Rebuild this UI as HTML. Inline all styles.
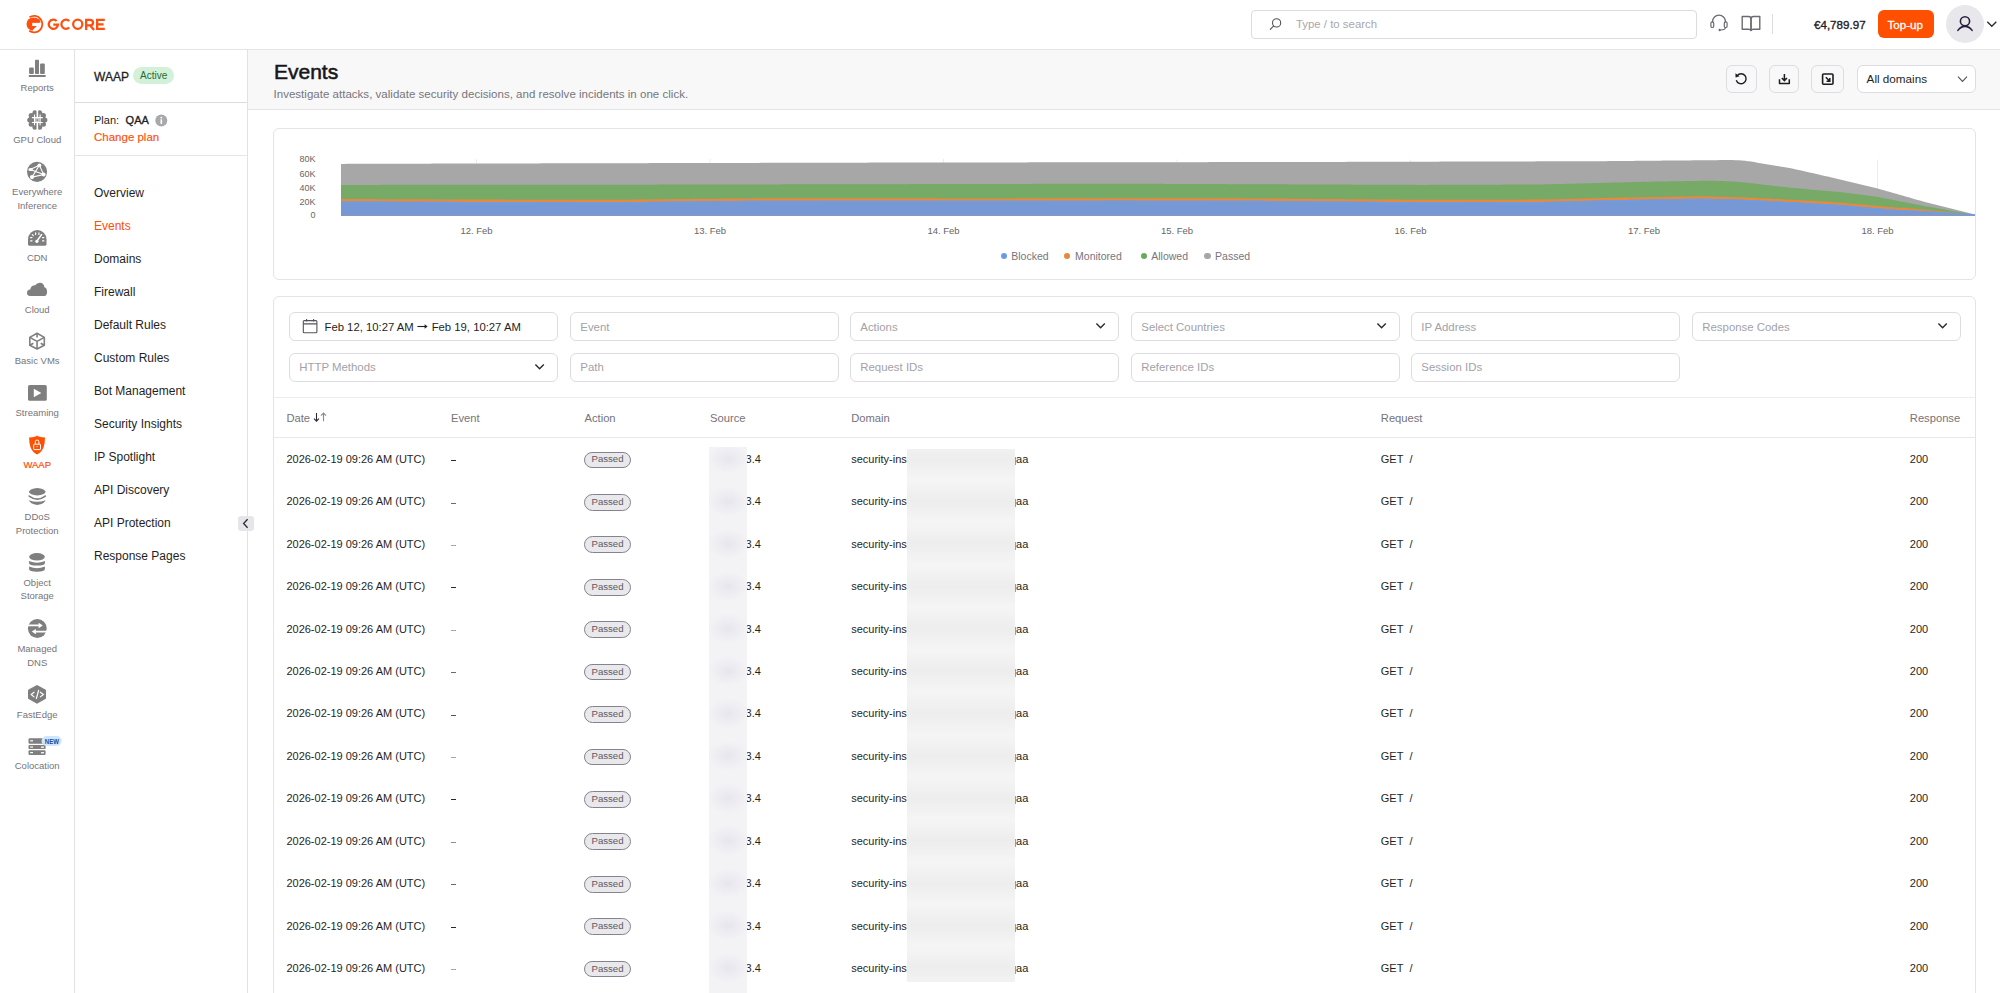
<!DOCTYPE html><html><head><meta charset="utf-8"><title>Events</title><style>
*{box-sizing:border-box;margin:0;padding:0}
html,body{width:2000px;height:993px;overflow:hidden;background:#fff}
body{position:relative;font-family:"Liberation Sans",sans-serif;color:#1f1f22}
.a{position:absolute}
.t{position:absolute;white-space:nowrap;line-height:1}
svg{position:absolute;overflow:visible}
</style></head><body>
<div class="a" style="left:0px;top:0px;width:2000px;height:50px;background:#fff;border-bottom:1px solid #e4e3e8;"></div>
<div class="a" style="left:0px;top:50px;width:75px;height:943px;background:#fff;border-right:1px solid #e2e1e6;"></div>
<div class="a" style="left:75px;top:50px;width:173px;height:943px;background:#fff;border-right:1px solid #e2e1e6;"></div>
<div class="a" style="left:248px;top:50px;width:1752px;height:60px;background:#f8f8f8;border-bottom:1px solid #e4e3e8;"></div>
<!-- logo -->
<svg style="left:0;top:0" width="120" height="50" viewBox="0 0 120 50">
  <circle cx="33.2" cy="24.1" r="6.7" fill="#ff4f0f"/>
  <path d="M35 17.6 L39.6 19.6 L40.6 22.85 L35 22.85 Z" fill="#ff4f0f"/>
  <rect x="32.2" y="22.85" width="9.2" height="3.1" fill="#fff"/>
  <path d="M36.8 25.9 L41.4 25.9 L41.4 32 L32.4 32 L33 29.8 Z" fill="#fff"/>
  <path d="M29.5 17.3 A8.25 8.25 0 1 1 29.2 30.8" fill="none" stroke="#ff4f0f" stroke-width="1.8"/>
  <g fill="none" stroke="#ff4f0f" stroke-width="2.25">
   <path d="M56.65 21.05 A4.6 4.6 0 1 0 57.95 24.6 H53.3"/>
   <path d="M69.25 21.05 A4.6 4.6 0 1 0 69.25 27.55"/>
   <circle cx="77.75" cy="24.3" r="4.6"/>
   <path d="M86.15 30 V19.75 H90.2 A2.85 2.85 0 0 1 90.2 25.45 H86.15 M90.2 25.45 L94.1 30"/>
   <path d="M104.8 19.75 H97.15 V28.85 H104.8 M97.15 24.35 H103.6"/>
  </g>
</svg>
<!-- search -->
<div class="a" style="left:1251px;top:10px;width:446px;height:29px;border:1px solid #dcdbe0;border-radius:4px;background:#fff"></div>
<svg style="left:1268px;top:16px" width="16" height="16" viewBox="0 0 16 16">
  <circle cx="8.6" cy="6.9" r="4.1" fill="none" stroke="#55535a" stroke-width="1.1"/>
  <path d="M5.7 9.8 L2.3 13.4" stroke="#55535a" stroke-width="1.1" stroke-linecap="round"/>
</svg>
<!-- headset -->
<svg style="left:1708px;top:13px" width="22" height="20" viewBox="0 0 22 20">
  <path d="M4.6 9.6 V8.6 A6.4 6.4 0 0 1 17.4 8.6 V9.6" fill="none" stroke="#6c6a71" stroke-width="1.3"/>
  <rect x="2.9" y="8.9" width="2.8" height="5.6" rx="1.3" fill="none" stroke="#6c6a71" stroke-width="1.2"/>
  <rect x="16.3" y="8.9" width="2.8" height="5.6" rx="1.3" fill="none" stroke="#6c6a71" stroke-width="1.2"/>
  <path d="M17.6 14.5 Q17.2 17 12.6 17" fill="none" stroke="#6c6a71" stroke-width="1.2"/>
  <circle cx="11.7" cy="17" r="1.2" fill="#6c6a71"/>
</svg>
<!-- book -->
<svg style="left:1740px;top:14px" width="22" height="20" viewBox="0 0 22 20">
  <path d="M2.2 2.5 H8.5 Q11 2.5 11 5 V16.5 Q10.5 15.2 8.5 15.2 H2.2 Z" fill="none" stroke="#6c6a71" stroke-width="1.4" stroke-linejoin="round"/>
  <path d="M19.8 2.5 H13.5 Q11 2.5 11 5 V16.5 Q11.5 15.2 13.5 15.2 H19.8 Z" fill="none" stroke="#6c6a71" stroke-width="1.4" stroke-linejoin="round"/>
</svg>
<div class="a" style="left:1772px;top:14px;width:1px;height:20px;background:#dddce1"></div>
<div class="a" style="left:1878px;top:10px;width:56px;height:28px;border-radius:6px;background:#ff4f00"></div>
<div class="a" style="left:1946px;top:5px;width:38px;height:38px;border-radius:50%;background:#e8e7ec"></div>
<svg style="left:1953px;top:12px" width="24" height="24" viewBox="0 0 24 24">
  <circle cx="12" cy="9.3" r="4.6" fill="none" stroke="#2a1f3d" stroke-width="1.6"/>
  <path d="M4.9 18.4 Q7.8 14.4 12 14.4 Q16.2 14.4 19.1 18.4" fill="none" stroke="#2a1f3d" stroke-width="1.6" stroke-linecap="round"/>
</svg>
<svg style="left:1985px;top:18px" width="14" height="12" viewBox="0 0 14 12">
  <path d="M2.3 3.8 L6.8 8.3 L11.3 3.8" fill="none" stroke="#2f2d33" stroke-width="1.4"/>
</svg>



<div class="t" style="left:1296px;top:19px;font-size:11.4px;color:#a9a7af;">Type / to search</div>
<div class="t" style="left:1814px;top:19px;font-size:11.6px;color:#1f1d24;-webkit-text-stroke:0.35px #1f1d24;">€4,789.97</div>
<div class="t" style="left:1887.5px;top:19px;font-size:11.6px;color:#ffffff;-webkit-text-stroke:0.3px #ffffff;">Top-up</div>
<svg style="left:0;top:0" width="75" height="800" viewBox="0 0 75 800">
 <g fill="#7f7f7f">
  <!-- Reports -->
  <rect x="29.1" y="67.4" width="4.7" height="6.6" rx="1"/>
  <rect x="35" y="59.8" width="4" height="14.2" rx="0.8"/>
  <rect x="40.1" y="63.6" width="4.7" height="10.4" rx="1"/>
  <rect x="28.8" y="75.1" width="16.9" height="1.8" rx="0.4"/>
  <!-- GPU cloud -->
  <circle cx="37.3" cy="119.9" r="8.2"/>
  <circle cx="39.65" cy="112.67" r="2.5"/><circle cx="43.45" cy="115.43" r="2.5"/><circle cx="44.90" cy="119.90" r="2.5"/><circle cx="43.45" cy="124.37" r="2.5"/><circle cx="39.65" cy="127.13" r="2.5"/><circle cx="34.95" cy="127.13" r="2.5"/><circle cx="31.15" cy="124.37" r="2.5"/><circle cx="29.70" cy="119.90" r="2.5"/><circle cx="31.15" cy="115.43" r="2.5"/><circle cx="34.95" cy="112.67" r="2.5"/>
 </g>
 <rect x="36.55" y="108" width="1.6" height="24" fill="#fff"/>
 <g stroke="#fff" stroke-width="1.1" fill="none">
  <path d="M34.5 114.6 V125.2 M40.1 114.6 V125.2 M31.9 117.6 H42.8 M31.9 122.5 H42.8"/>
 </g>
 <rect x="35.1" y="118.2" width="4.4" height="3.7" fill="#d0d0d0"/>
 <rect x="36.4" y="119.2" width="1.8" height="1.7" fill="#8a8a8a"/>
 <!-- Everywhere inference -->
 <circle cx="37.05" cy="171.85" r="10.05" fill="#7f7f7f"/>
 <g stroke="#fff" stroke-width="1.1" fill="none">
  <path d="M39.4 165.3 L32 177.1 L43.7 174.5 Z M30.2 169.5 L39.4 165.3 M30.2 169.5 L43.7 174.5"/>
 </g>
 <g fill="#fff">
  <circle cx="39.4" cy="165.3" r="1.9"/>
  <ellipse cx="30.6" cy="169.4" rx="2.3" ry="1.5"/>
  <circle cx="32" cy="177.1" r="2.1"/>
  <circle cx="43.7" cy="174.5" r="1.9"/>
 </g>
 <!-- CDN -->
 <path d="M28 239.2 A9.25 9.25 0 0 1 46.5 239.2 V244.3 Q46.5 245.7 45.1 245.7 H29.4 Q28 245.7 28 244.3 Z" fill="#7f7f7f"/>
 <g stroke="#fff" stroke-width="1.2" stroke-linecap="round" fill="none">
  <path d="M35.6 232.9 V234.4 M38.9 232.9 V234.4 M32.3 234.6 L33.3 235.6 M30.6 237.6 H32 M30.6 240.8 H32 M42.5 237.6 H43.9 M42.5 240.8 H43.9"/>
  <path d="M37 241 L41.6 234.5" stroke-width="1.4"/>
 </g>
 <circle cx="36.9" cy="241.3" r="1.6" fill="#fff"/>
 <!-- Cloud -->
 <path d="M30.4 296.1 Q27 296.1 27 292.8 Q27 289.6 30.2 289.4 Q31.2 285.2 35.2 285.3 Q36.8 282.4 40.6 282.7 Q44 283.2 44.4 287.3 Q47.1 288.1 47.1 291.9 Q47.1 296.1 43.3 296.1 Z" fill="#7f7f7f"/>
 <!-- Basic VMs cube -->
 <g stroke="#7f7f7f" stroke-width="1.6" fill="none" stroke-linejoin="round">
  <path d="M37.05 333.2 L44.3 337.4 V345.2 L37.05 349 L29.8 345.2 V337.4 Z"/>
  <path d="M29.8 337.4 L37.05 341.4 L44.3 337.4 M37.05 341.4 V349 M37.05 333.2 V337.6 M29.8 345.2 L33.4 343.2 M44.3 345.2 L40.7 343.2"/>
 </g>
 <!-- Streaming -->
 <rect x="28" y="385.1" width="18.8" height="15.7" rx="1.6" fill="#7f7f7f"/>
 <path d="M33.8 388.8 L41.3 393 L33.8 397.3 Z" fill="#fff"/>
 <!-- WAAP shield -->
 <path d="M37.05 435.4 Q38 437 45 437.4 Q45 442.5 43.6 447.2 Q41.5 452.3 37.05 454.5 Q32.6 452.3 30.5 447.2 Q29.1 442.5 29.1 437.4 Q36.1 437 37.05 435.4 Z" fill="#ff4f00"/>
 <g stroke="#fff" stroke-width="1" fill="none">
  <rect x="33.7" y="444.2" width="6.8" height="5.4" rx="0.6"/>
  <path d="M35.3 444.2 V441.8 A1.8 1.8 0 0 1 38.9 441.8 V444.2"/>
 </g>
 <circle cx="37.1" cy="446.6" r="0.6" fill="#fff"/>
 <!-- DDoS -->
 <path d="M28.8 491.8 Q30 488.6 37.25 487.9 Q44.5 488.6 45.7 491.8 Q44.5 495 37.25 495.6 Q30 495 28.8 491.8 Z" fill="#7f7f7f"/>
 <path d="M29.2 496.1 Q37.25 502.2 45.3 496.1" stroke="#7f7f7f" stroke-width="1.6" fill="none" stroke-linecap="round"/>
 <path d="M28.9 500.2 Q37.25 503.4 45.6 500.2 Q44.6 503.6 37.25 505.1 Q29.9 503.6 28.9 500.2 Z" fill="#7f7f7f"/>
 <!-- Object storage -->
 <ellipse cx="37" cy="556.8" rx="7.85" ry="3.7" fill="#7f7f7f"/>
 <path d="M29.1 561 Q37 564.6 44.9 561 V563.2 Q44.9 565.5 37 565.5 Q29.1 565.5 29.1 563.2 Z" fill="#7f7f7f"/>
 <path d="M29.1 566.6 Q37 570 44.9 566.6 V569 Q44.9 571.8 37 571.8 Q29.1 571.8 29.1 569 Z" fill="#7f7f7f"/>
 <!-- Managed DNS -->
 <circle cx="37.3" cy="628.5" r="9.4" fill="#7f7f7f"/>
 <g fill="#fff">
  <path d="M27.6 624.6 H38.6 V622.8 L42.8 625.4 L38.6 628.2 V626.2 H27.6 Z"/>
  <path d="M47 630.8 H35.9 V629.1 L31.7 631.6 L35.9 634.2 V632.4 H47 Z"/>
 </g>
 <!-- FastEdge -->
 <path d="M37 685 L45.4 689.6 Q46 690 46 690.8 V697.9 Q46 698.7 45.4 699.1 L37 703.7 L28.6 699.1 Q28 698.7 28 697.9 V690.8 Q28 690 28.6 689.6 Z" fill="#7f7f7f"/>
 <g stroke="#fff" stroke-width="1.2" fill="none" stroke-linecap="round">
  <path d="M34 692.2 L31.2 694.5 L34 696.9 M40.3 692.2 L43.4 694.5 L40.3 696.9 M38.6 690.4 L36.4 698.5"/>
 </g>
 <!-- Colocation -->
 <g fill="#7f7f7f">
  <rect x="28.5" y="738.2" width="17.1" height="5.6" rx="1.3"/>
  <rect x="28.5" y="744.9" width="17.1" height="4.2" rx="1.2"/>
  <rect x="28.5" y="750.3" width="17.1" height="4.6" rx="1.2"/>
 </g>
 <g fill="#fff">
  <rect x="30.2" y="740.2" width="2.8" height="1.2"/>
  <rect x="30.2" y="746.4" width="2.8" height="1.2"/>
  <rect x="30.2" y="752" width="2.8" height="1.2"/>
  <rect x="41" y="746.5" width="3" height="1.3"/>
  <rect x="41" y="752.1" width="3" height="1.3"/>
 </g>
 <rect x="41.6" y="736" width="20.1" height="10" rx="5" fill="#d3e5fa"/>
 <text x="44.8" y="743.7" font-family="Liberation Sans" font-weight="700" font-size="6.6" fill="#1d4b8f" textLength="14.2" lengthAdjust="spacingAndGlyphs">NEW</text>
</svg>

<div class="t" style="left:0.20000000000000284px;width:74px;text-align:center;top:83px;font-size:9.5px;color:#76747b;">Reports</div>
<div class="t" style="left:0.20000000000000284px;width:74px;text-align:center;top:135px;font-size:9.5px;color:#76747b;">GPU Cloud</div>
<div class="t" style="left:0.20000000000000284px;width:74px;text-align:center;top:187px;font-size:9.5px;color:#76747b;">Everywhere</div>
<div class="t" style="left:0.20000000000000284px;width:74px;text-align:center;top:201px;font-size:9.5px;color:#76747b;">Inference</div>
<div class="t" style="left:0.20000000000000284px;width:74px;text-align:center;top:253px;font-size:9.5px;color:#76747b;">CDN</div>
<div class="t" style="left:0.20000000000000284px;width:74px;text-align:center;top:305px;font-size:9.5px;color:#76747b;">Cloud</div>
<div class="t" style="left:0.20000000000000284px;width:74px;text-align:center;top:356px;font-size:9.5px;color:#76747b;">Basic VMs</div>
<div class="t" style="left:0.20000000000000284px;width:74px;text-align:center;top:408px;font-size:9.5px;color:#76747b;">Streaming</div>
<div class="t" style="left:0.20000000000000284px;width:74px;text-align:center;top:460px;font-size:9.5px;color:#ff4e08;-webkit-text-stroke:0.2px #ff4e08;">WAAP</div>
<div class="t" style="left:0.20000000000000284px;width:74px;text-align:center;top:512px;font-size:9.5px;color:#76747b;">DDoS</div>
<div class="t" style="left:0.20000000000000284px;width:74px;text-align:center;top:526px;font-size:9.5px;color:#76747b;">Protection</div>
<div class="t" style="left:0.20000000000000284px;width:74px;text-align:center;top:578px;font-size:9.5px;color:#76747b;">Object</div>
<div class="t" style="left:0.20000000000000284px;width:74px;text-align:center;top:591px;font-size:9.5px;color:#76747b;">Storage</div>
<div class="t" style="left:0.20000000000000284px;width:74px;text-align:center;top:644px;font-size:9.5px;color:#76747b;">Managed</div>
<div class="t" style="left:0.20000000000000284px;width:74px;text-align:center;top:658px;font-size:9.5px;color:#76747b;">DNS</div>
<div class="t" style="left:0.20000000000000284px;width:74px;text-align:center;top:710px;font-size:9.5px;color:#76747b;">FastEdge</div>
<div class="t" style="left:0.20000000000000284px;width:74px;text-align:center;top:761px;font-size:9.5px;color:#76747b;">Colocation</div>
<div class="t" style="left:94px;top:71px;font-size:12px;color:#1f1f22;-webkit-text-stroke:0.3px #1f1f22;">WAAP</div>
<div class="a" style="left:133px;top:67px;width:41px;height:17px;background:#d3f1d9;border-radius:8.5px;"></div>
<div class="t" style="left:140px;top:71px;font-size:10px;color:#1f6b36;">Active</div>
<div class="a" style="left:75px;top:102px;width:172px;height:1px;background:#dcdbe0;"></div>
<div class="t" style="left:94px;top:115px;font-size:11px;color:#1f1f22;">Plan:</div>
<div class="t" style="left:125.6px;top:115px;font-size:11px;color:#1f1f22;-webkit-text-stroke:0.35px #1f1f22;">QAA</div>
<svg style="left:155px;top:114px" width="13" height="13" viewBox="0 0 13 13"><circle cx="6.3" cy="6.5" r="6" fill="#a9a8ad"/><rect x="5.5" y="5.3" width="1.6" height="4.6" fill="#fff"/><circle cx="6.3" cy="3.6" r="0.95" fill="#fff"/></svg>
<div class="t" style="left:94px;top:132px;font-size:11.5px;color:#ff4e08;-webkit-text-stroke:0.15px #ff4e08;">Change plan</div>
<div class="a" style="left:75px;top:155px;width:172px;height:1px;background:#e6e5ea;"></div>
<div class="t" style="left:94px;top:187px;font-size:12px;color:#1f1f22;">Overview</div>
<div class="t" style="left:94px;top:220px;font-size:12px;color:#ff4e08;">Events</div>
<div class="t" style="left:94px;top:253px;font-size:12px;color:#1f1f22;">Domains</div>
<div class="t" style="left:94px;top:286px;font-size:12px;color:#1f1f22;">Firewall</div>
<div class="t" style="left:94px;top:319px;font-size:12px;color:#1f1f22;">Default Rules</div>
<div class="t" style="left:94px;top:352px;font-size:12px;color:#1f1f22;">Custom Rules</div>
<div class="t" style="left:94px;top:385px;font-size:12px;color:#1f1f22;">Bot Management</div>
<div class="t" style="left:94px;top:418px;font-size:12px;color:#1f1f22;">Security Insights</div>
<div class="t" style="left:94px;top:451px;font-size:12px;color:#1f1f22;">IP Spotlight</div>
<div class="t" style="left:94px;top:484px;font-size:12px;color:#1f1f22;">API Discovery</div>
<div class="t" style="left:94px;top:517px;font-size:12px;color:#1f1f22;">API Protection</div>
<div class="t" style="left:94px;top:550px;font-size:12px;color:#1f1f22;">Response Pages</div>
<div class="a" style="left:238px;top:516px;width:16px;height:15px;background:#e6e5e9;border-radius:3px;"></div>
<svg style="left:238px;top:516px" width="16" height="15" viewBox="0 0 16 15"><path d="M9.6 3.2 L5.6 7.5 L9.6 11.8" fill="none" stroke="#2b2a30" stroke-width="1.3"/></svg>
<div class="t" style="left:274px;top:61px;font-size:21px;color:#17161b;-webkit-text-stroke:0.55px #17161b;">Events</div>
<div class="t" style="left:273.5px;top:89px;font-size:11.5px;color:#77757c;letter-spacing:0.02px;">Investigate attacks, validate security decisions, and resolve incidents in one click.</div>
<div class="a" style="left:1726px;top:65px;width:31px;height:28px;background:#f8f8f8;border:1px solid #dddce2;border-radius:6px;"></div>
<div class="a" style="left:1769px;top:65px;width:30px;height:28px;background:#f8f8f8;border:1px solid #dddce2;border-radius:6px;"></div>
<div class="a" style="left:1811px;top:65px;width:33px;height:28px;background:#f8f8f8;border:1px solid #dddce2;border-radius:6px;"></div>
<div class="a" style="left:1857px;top:65px;width:119px;height:28px;background:#ffffff;border:1px solid #dddce2;border-radius:6px;"></div>
<svg style="left:1726px;top:65px" width="31" height="28" viewBox="1726 65 31 28">
 <path d="M1737.2 75.6 A5 5 0 1 1 1736.3 80.2" fill="none" stroke="#1d1c21" stroke-width="1.4"/>
 <path d="M1735.4 73.2 L1735.6 77.4 L1739.6 76.3 Z" fill="#1d1c21"/>
</svg>
<svg style="left:1769px;top:65px" width="30" height="28" viewBox="1769 65 30 28">
 <path d="M1779.5 79.3 V83.6 H1789.3 V79.3" fill="none" stroke="#1d1c21" stroke-width="1.5" stroke-linejoin="round"/>
 <path d="M1784.4 74 V80.4 M1781.8 78 L1784.4 80.6 L1787 78" fill="none" stroke="#1d1c21" stroke-width="1.5"/>
</svg>
<svg style="left:1811px;top:65px" width="33" height="28" viewBox="1811 65 33 28">
 <rect x="1822.6" y="74" width="10.4" height="10.2" rx="1" fill="none" stroke="#1d1c21" stroke-width="1.6"/>
 <path d="M1825.8 77.2 L1829.4 80.8 M1826.6 81.2 H1829.8 V78" fill="none" stroke="#1d1c21" stroke-width="1.5"/>
</svg>
<div class="t" style="left:1866.6px;top:73px;font-size:11.7px;color:#1f1f22;">All domains</div>
<svg style="left:1955px;top:74px" width="14" height="10" viewBox="0 0 14 10"><path d="M3 2.6 L7.5 7.4 L12 2.6" fill="none" stroke="#55535a" stroke-width="1.1"/></svg>
<div class="a" style="left:273px;top:128px;width:1703px;height:152px;background:#fff;border:1px solid #e4e3e8;border-radius:6px;"></div>
<div class="t" style="left:0px;top:155px;font-size:9px;color:#666666;width:315.5px;text-align:right;left:0;">80K</div>
<div class="t" style="left:0px;top:170px;font-size:9px;color:#666666;width:315.5px;text-align:right;left:0;">60K</div>
<div class="t" style="left:0px;top:184px;font-size:9px;color:#666666;width:315.5px;text-align:right;left:0;">40K</div>
<div class="t" style="left:0px;top:198px;font-size:9px;color:#666666;width:315.5px;text-align:right;left:0;">20K</div>
<div class="t" style="left:0px;top:211px;font-size:9px;color:#666666;width:315.5px;text-align:right;left:0;">0</div>
<svg style="left:273px;top:128px" width="1703" height="152" viewBox="273 128 1703 152">
 <path d="M476.5 159 V163 M710 159 V163 M943.5 159 V163 M1177 159.5 V163 M1410.5 159.5 V163 M1877.5 159.5 V189" stroke="#ececec" stroke-width="1"/>
 <path d="M341 215.8 L341.0 163.90 L344.1 163.88 L347.2 163.87 L350.3 163.87 L353.4 163.86 L356.5 163.85 L359.6 163.84 L362.7 163.83 L365.8 163.82 L368.9 163.81 L372.1 163.79 L375.2 163.78 L378.3 163.77 L381.4 163.76 L384.5 163.75 L387.6 163.74 L390.7 163.73 L393.8 163.72 L396.9 163.71 L400.0 163.70 L403.0 163.69 L406.0 163.69 L409.0 163.68 L412.0 163.67 L415.1 163.67 L418.1 163.66 L421.1 163.65 L424.1 163.64 L427.1 163.64 L430.1 163.63 L433.1 163.62 L436.1 163.62 L439.2 163.61 L442.2 163.60 L445.2 163.60 L448.2 163.59 L451.2 163.58 L454.2 163.58 L457.2 163.57 L460.2 163.56 L463.3 163.55 L466.3 163.55 L469.3 163.54 L472.3 163.53 L475.3 163.53 L478.3 163.52 L481.3 163.51 L484.3 163.51 L487.3 163.50 L490.4 163.49 L493.4 163.49 L496.4 163.48 L499.4 163.47 L502.4 163.46 L505.4 163.46 L508.4 163.45 L511.4 163.44 L514.5 163.44 L517.5 163.43 L520.5 163.42 L523.5 163.42 L526.5 163.41 L529.5 163.40 L532.5 163.40 L535.5 163.39 L538.6 163.38 L541.6 163.37 L544.6 163.37 L547.6 163.36 L550.6 163.35 L553.6 163.35 L556.6 163.34 L559.6 163.33 L562.7 163.33 L565.7 163.32 L568.7 163.31 L571.7 163.31 L574.7 163.30 L577.7 163.29 L580.7 163.28 L583.7 163.28 L586.7 163.27 L589.8 163.26 L592.8 163.26 L595.8 163.25 L598.8 163.24 L601.8 163.24 L604.8 163.23 L607.8 163.22 L610.8 163.22 L613.9 163.21 L616.9 163.20 L619.9 163.19 L622.9 163.19 L625.9 163.18 L628.9 163.17 L631.9 163.17 L634.9 163.16 L638.0 163.15 L641.0 163.15 L644.0 163.14 L647.0 163.13 L650.0 163.12 L653.0 163.12 L656.0 163.11 L659.0 163.10 L662.0 163.10 L665.1 163.09 L668.1 163.08 L671.1 163.08 L674.1 163.07 L677.1 163.06 L680.1 163.06 L683.1 163.05 L686.1 163.04 L689.2 163.03 L692.2 163.03 L695.2 163.02 L698.2 163.01 L701.2 163.01 L704.2 163.00 L707.2 162.99 L710.2 162.99 L713.3 162.98 L716.3 162.97 L719.3 162.97 L722.3 162.96 L725.3 162.95 L728.3 162.94 L731.3 162.94 L734.3 162.93 L737.3 162.92 L740.4 162.92 L743.4 162.91 L746.4 162.90 L749.4 162.90 L752.4 162.89 L755.4 162.88 L758.4 162.88 L761.4 162.87 L764.5 162.86 L767.5 162.85 L770.5 162.85 L773.5 162.84 L776.5 162.83 L779.5 162.83 L782.5 162.82 L785.5 162.81 L788.6 162.81 L791.6 162.80 L794.6 162.79 L797.6 162.79 L800.6 162.78 L803.6 162.77 L806.6 162.76 L809.6 162.76 L812.7 162.75 L815.7 162.74 L818.7 162.74 L821.7 162.73 L824.7 162.72 L827.7 162.72 L830.7 162.71 L833.7 162.70 L836.7 162.70 L839.8 162.69 L842.8 162.68 L845.8 162.67 L848.8 162.67 L851.8 162.66 L854.8 162.65 L857.8 162.65 L860.8 162.64 L863.9 162.63 L866.9 162.63 L869.9 162.62 L872.9 162.61 L875.9 162.61 L878.9 162.60 L881.9 162.59 L884.9 162.58 L888.0 162.58 L891.0 162.57 L894.0 162.56 L897.0 162.56 L900.0 162.55 L903.0 162.55 L906.0 162.54 L909.0 162.54 L912.0 162.53 L915.0 162.53 L918.0 162.53 L921.1 162.52 L924.1 162.52 L927.1 162.51 L930.1 162.51 L933.1 162.50 L936.1 162.50 L939.1 162.50 L942.1 162.49 L945.1 162.49 L948.1 162.48 L951.1 162.48 L954.1 162.48 L957.1 162.47 L960.2 162.47 L963.2 162.46 L966.2 162.46 L969.2 162.45 L972.2 162.45 L975.2 162.45 L978.2 162.44 L981.2 162.44 L984.2 162.43 L987.2 162.43 L990.2 162.43 L993.2 162.42 L996.2 162.42 L999.2 162.41 L1002.3 162.41 L1005.3 162.41 L1008.3 162.40 L1011.3 162.40 L1014.3 162.39 L1017.3 162.39 L1020.3 162.38 L1023.3 162.38 L1026.3 162.38 L1029.3 162.37 L1032.3 162.37 L1035.3 162.36 L1038.3 162.36 L1041.4 162.36 L1044.4 162.35 L1047.4 162.35 L1050.4 162.34 L1053.4 162.34 L1056.4 162.33 L1059.4 162.33 L1062.4 162.33 L1065.4 162.32 L1068.4 162.32 L1071.4 162.31 L1074.4 162.31 L1077.4 162.31 L1080.5 162.30 L1083.5 162.30 L1086.5 162.29 L1089.5 162.29 L1092.5 162.29 L1095.5 162.28 L1098.5 162.28 L1101.5 162.27 L1104.5 162.27 L1107.5 162.26 L1110.5 162.26 L1113.5 162.26 L1116.5 162.25 L1119.5 162.25 L1122.6 162.24 L1125.6 162.24 L1128.6 162.24 L1131.6 162.23 L1134.6 162.23 L1137.6 162.22 L1140.6 162.22 L1143.6 162.22 L1146.6 162.21 L1149.6 162.21 L1152.6 162.20 L1155.6 162.20 L1158.6 162.19 L1161.7 162.19 L1164.7 162.19 L1167.7 162.18 L1170.7 162.18 L1173.7 162.17 L1176.7 162.17 L1179.7 162.17 L1182.7 162.16 L1185.7 162.16 L1188.7 162.15 L1191.7 162.15 L1194.7 162.14 L1197.7 162.14 L1200.8 162.14 L1203.8 162.13 L1206.8 162.13 L1209.8 162.12 L1212.8 162.12 L1215.8 162.12 L1218.8 162.11 L1221.8 162.11 L1224.8 162.10 L1227.8 162.10 L1230.8 162.10 L1233.8 162.09 L1236.8 162.09 L1239.8 162.08 L1242.9 162.08 L1245.9 162.07 L1248.9 162.07 L1251.9 162.07 L1254.9 162.06 L1257.9 162.06 L1260.9 162.05 L1263.9 162.05 L1266.9 162.05 L1269.9 162.04 L1272.9 162.04 L1275.9 162.03 L1278.9 162.03 L1282.0 162.02 L1285.0 162.02 L1288.0 162.02 L1291.0 162.01 L1294.0 162.01 L1297.0 162.00 L1300.0 162.00 L1303.0 161.99 L1306.0 161.98 L1309.0 161.98 L1312.0 161.97 L1315.0 161.96 L1318.0 161.95 L1321.0 161.94 L1324.0 161.94 L1327.0 161.93 L1330.0 161.92 L1333.0 161.91 L1336.0 161.90 L1339.0 161.90 L1342.0 161.89 L1345.0 161.88 L1348.0 161.87 L1351.0 161.86 L1354.0 161.86 L1357.0 161.85 L1360.0 161.84 L1363.0 161.83 L1366.0 161.82 L1369.0 161.82 L1372.0 161.81 L1375.0 161.80 L1378.0 161.79 L1381.0 161.78 L1384.0 161.78 L1387.0 161.77 L1390.0 161.76 L1393.0 161.75 L1396.0 161.74 L1399.0 161.74 L1402.0 161.73 L1405.0 161.72 L1408.0 161.71 L1411.0 161.70 L1414.0 161.70 L1417.0 161.69 L1420.0 161.68 L1423.0 161.67 L1426.0 161.66 L1429.0 161.66 L1432.0 161.65 L1435.0 161.64 L1438.0 161.63 L1441.0 161.62 L1444.0 161.62 L1447.0 161.61 L1450.0 161.60 L1453.0 161.59 L1456.0 161.58 L1459.0 161.58 L1462.0 161.57 L1465.0 161.56 L1468.0 161.55 L1471.0 161.54 L1474.0 161.54 L1477.0 161.53 L1480.0 161.52 L1483.0 161.51 L1486.0 161.50 L1489.0 161.50 L1492.0 161.49 L1495.0 161.48 L1498.0 161.47 L1501.0 161.46 L1504.0 161.46 L1507.0 161.45 L1510.0 161.44 L1513.0 161.43 L1516.0 161.42 L1519.0 161.42 L1522.0 161.41 L1525.0 161.40 L1528.0 161.39 L1531.0 161.38 L1534.0 161.38 L1537.0 161.37 L1540.0 161.36 L1543.0 161.35 L1546.0 161.34 L1549.0 161.34 L1552.0 161.33 L1555.0 161.32 L1558.0 161.31 L1561.0 161.30 L1564.0 161.30 L1567.0 161.29 L1570.0 161.28 L1573.0 161.27 L1576.0 161.26 L1579.0 161.26 L1582.0 161.25 L1585.0 161.24 L1588.0 161.23 L1591.0 161.22 L1594.0 161.21 L1597.0 161.20 L1600.0 161.18 L1603.0 161.16 L1606.0 161.14 L1609.0 161.12 L1612.0 161.09 L1615.0 161.06 L1618.0 161.03 L1621.0 161.01 L1624.0 160.98 L1627.0 160.95 L1630.0 160.92 L1633.0 160.90 L1636.0 160.87 L1639.0 160.84 L1642.0 160.81 L1645.0 160.79 L1648.0 160.76 L1651.0 160.73 L1654.0 160.70 L1657.0 160.68 L1660.0 160.65 L1663.0 160.62 L1666.0 160.59 L1669.0 160.57 L1672.0 160.54 L1675.0 160.51 L1678.0 160.48 L1681.0 160.46 L1684.0 160.43 L1687.0 160.40 L1690.0 160.38 L1693.0 160.35 L1696.0 160.32 L1699.0 160.29 L1702.0 160.27 L1705.0 160.24 L1708.0 160.21 L1711.0 160.18 L1714.0 160.16 L1717.0 160.14 L1720.0 160.12 L1723.1 160.11 L1726.3 160.10 L1729.4 160.10 L1732.6 160.10 L1735.7 160.17 L1738.9 160.32 L1742.0 160.53 L1745.1 160.82 L1748.1 161.18 L1751.2 161.62 L1754.2 162.12 L1757.3 162.63 L1760.4 163.14 L1763.4 163.64 L1766.5 164.15 L1769.6 164.66 L1772.6 165.16 L1775.7 165.67 L1778.8 166.17 L1781.8 166.68 L1784.9 167.22 L1787.9 167.78 L1791.0 168.37 L1794.1 168.98 L1797.1 169.63 L1800.2 170.30 L1803.2 171.00 L1806.3 171.70 L1809.4 172.40 L1812.4 173.10 L1815.5 173.80 L1818.6 174.50 L1821.6 175.20 L1824.7 175.90 L1827.8 176.60 L1830.8 177.30 L1833.9 178.01 L1836.9 178.72 L1840.0 179.45 L1843.2 180.18 L1846.3 180.93 L1849.5 181.67 L1852.6 182.43 L1855.8 183.19 L1858.9 183.95 L1862.0 184.71 L1865.2 185.47 L1868.3 186.22 L1871.5 187.00 L1874.6 187.80 L1877.8 188.61 L1880.9 189.44 L1884.0 190.29 L1887.0 191.16 L1890.1 192.05 L1893.2 192.93 L1896.3 193.82 L1899.4 194.71 L1902.4 195.59 L1905.5 196.48 L1908.6 197.37 L1911.7 198.25 L1914.8 199.14 L1917.8 200.01 L1920.9 200.86 L1924.0 201.69 L1927.0 202.50 L1930.0 203.29 L1933.0 204.06 L1936.0 204.81 L1939.0 205.56 L1942.0 206.32 L1945.0 207.07 L1948.0 207.82 L1951.0 208.58 L1954.0 209.33 L1957.0 210.08 L1960.0 210.84 L1963.0 211.59 L1966.0 212.34 L1969.0 213.09 L1972.0 213.85 L1975.0 214.60 L1975 215.8 Z" fill="#a7a7a7"/>
 <path d="M341 215.8 L341.0 184.90 L344.0 184.90 L347.1 184.89 L350.1 184.89 L353.2 184.89 L356.2 184.89 L359.2 184.89 L362.3 184.89 L365.3 184.88 L368.4 184.88 L371.4 184.88 L374.4 184.88 L377.5 184.88 L380.5 184.87 L383.6 184.87 L386.6 184.87 L389.7 184.87 L392.7 184.87 L395.7 184.86 L398.8 184.86 L401.8 184.86 L404.9 184.86 L407.9 184.86 L410.9 184.85 L414.0 184.85 L417.0 184.85 L420.1 184.85 L423.1 184.84 L426.1 184.84 L429.2 184.84 L432.2 184.84 L435.3 184.84 L438.3 184.83 L441.3 184.83 L444.4 184.83 L447.4 184.83 L450.5 184.83 L453.5 184.82 L456.6 184.82 L459.6 184.82 L462.6 184.82 L465.7 184.82 L468.7 184.81 L471.8 184.81 L474.8 184.81 L477.8 184.81 L480.9 184.81 L483.9 184.80 L487.0 184.80 L490.0 184.80 L493.0 184.80 L496.0 184.80 L499.1 184.79 L502.1 184.79 L505.1 184.79 L508.1 184.79 L511.2 184.78 L514.2 184.78 L517.2 184.78 L520.2 184.78 L523.3 184.77 L526.3 184.77 L529.3 184.77 L532.3 184.77 L535.3 184.77 L538.4 184.76 L541.4 184.76 L544.4 184.76 L547.4 184.76 L550.5 184.75 L553.5 184.75 L556.5 184.75 L559.5 184.75 L562.6 184.74 L565.6 184.74 L568.6 184.74 L571.6 184.74 L574.7 184.73 L577.7 184.73 L580.7 184.73 L583.7 184.73 L586.7 184.73 L589.8 184.72 L592.8 184.72 L595.8 184.72 L598.8 184.72 L601.9 184.71 L604.9 184.71 L607.9 184.71 L610.9 184.71 L614.0 184.70 L617.0 184.70 L620.0 184.70 L623.0 184.69 L626.0 184.69 L629.0 184.68 L632.0 184.68 L635.1 184.67 L638.1 184.66 L641.1 184.66 L644.1 184.65 L647.1 184.65 L650.1 184.64 L653.1 184.63 L656.1 184.63 L659.2 184.62 L662.2 184.62 L665.2 184.61 L668.2 184.60 L671.2 184.60 L674.2 184.59 L677.2 184.59 L680.2 184.58 L683.3 184.57 L686.3 184.57 L689.3 184.56 L692.3 184.56 L695.3 184.55 L698.3 184.54 L701.3 184.54 L704.3 184.53 L707.3 184.53 L710.4 184.52 L713.4 184.51 L716.4 184.51 L719.4 184.50 L722.4 184.50 L725.4 184.49 L728.4 184.48 L731.4 184.48 L734.5 184.47 L737.5 184.47 L740.5 184.46 L743.5 184.45 L746.5 184.45 L749.5 184.44 L752.5 184.43 L755.5 184.43 L758.6 184.42 L761.6 184.42 L764.6 184.41 L767.6 184.40 L770.6 184.40 L773.6 184.39 L776.6 184.39 L779.6 184.38 L782.7 184.37 L785.7 184.37 L788.7 184.36 L791.7 184.36 L794.7 184.35 L797.7 184.34 L800.7 184.34 L803.7 184.33 L806.7 184.33 L809.8 184.32 L812.8 184.31 L815.8 184.31 L818.8 184.30 L821.8 184.30 L824.8 184.29 L827.8 184.28 L830.8 184.28 L833.9 184.27 L836.9 184.27 L839.9 184.26 L842.9 184.25 L845.9 184.25 L848.9 184.24 L851.9 184.24 L854.9 184.23 L858.0 184.22 L861.0 184.22 L864.0 184.21 L867.0 184.21 L870.0 184.20 L873.0 184.19 L876.0 184.19 L879.0 184.18 L882.0 184.18 L885.1 184.17 L888.1 184.16 L891.1 184.16 L894.1 184.15 L897.1 184.15 L900.1 184.14 L903.1 184.13 L906.1 184.13 L909.2 184.12 L912.2 184.12 L915.2 184.11 L918.2 184.10 L921.2 184.10 L924.2 184.09 L927.2 184.09 L930.2 184.08 L933.3 184.07 L936.3 184.07 L939.3 184.06 L942.3 184.06 L945.3 184.05 L948.3 184.04 L951.3 184.04 L954.3 184.03 L957.3 184.03 L960.4 184.02 L963.4 184.01 L966.4 184.01 L969.4 184.00 L972.4 184.00 L975.4 183.99 L978.4 183.98 L981.4 183.98 L984.5 183.97 L987.5 183.97 L990.5 183.96 L993.5 183.95 L996.5 183.95 L999.5 183.94 L1002.5 183.93 L1005.5 183.93 L1008.6 183.92 L1011.6 183.92 L1014.6 183.91 L1017.6 183.90 L1020.6 183.90 L1023.6 183.89 L1026.6 183.89 L1029.6 183.88 L1032.7 183.87 L1035.7 183.87 L1038.7 183.86 L1041.7 183.86 L1044.7 183.85 L1047.7 183.84 L1050.7 183.84 L1053.7 183.83 L1056.7 183.83 L1059.8 183.82 L1062.8 183.81 L1065.8 183.81 L1068.8 183.80 L1071.8 183.80 L1074.8 183.79 L1077.8 183.78 L1080.8 183.78 L1083.9 183.77 L1086.9 183.77 L1089.9 183.76 L1092.9 183.75 L1095.9 183.75 L1098.9 183.74 L1101.9 183.74 L1104.9 183.73 L1108.0 183.72 L1111.0 183.72 L1114.0 183.71 L1117.0 183.71 L1120.0 183.72 L1123.0 183.72 L1126.0 183.73 L1129.0 183.74 L1132.0 183.75 L1135.0 183.76 L1138.0 183.77 L1141.0 183.78 L1144.0 183.80 L1147.0 183.81 L1150.0 183.82 L1153.0 183.83 L1156.0 183.84 L1159.0 183.86 L1162.0 183.87 L1165.0 183.88 L1168.0 183.89 L1171.0 183.90 L1174.0 183.92 L1177.0 183.93 L1180.0 183.94 L1183.0 183.95 L1186.0 183.96 L1189.0 183.98 L1192.0 183.99 L1195.0 184.00 L1198.0 184.01 L1201.0 184.02 L1204.0 184.04 L1207.0 184.05 L1210.0 184.06 L1213.0 184.07 L1216.0 184.08 L1219.0 184.10 L1222.0 184.11 L1225.0 184.12 L1228.0 184.13 L1231.0 184.14 L1234.0 184.16 L1237.0 184.17 L1240.0 184.18 L1243.0 184.19 L1246.0 184.20 L1249.0 184.22 L1252.0 184.23 L1255.0 184.24 L1258.0 184.25 L1261.0 184.26 L1264.0 184.28 L1267.0 184.29 L1270.0 184.30 L1273.0 184.31 L1276.0 184.32 L1279.0 184.34 L1282.0 184.35 L1285.0 184.36 L1288.0 184.37 L1291.0 184.38 L1294.0 184.40 L1297.0 184.41 L1300.0 184.42 L1303.0 184.43 L1306.0 184.44 L1309.0 184.46 L1312.0 184.47 L1315.0 184.48 L1318.0 184.49 L1321.0 184.50 L1324.0 184.52 L1327.0 184.53 L1330.0 184.54 L1333.0 184.55 L1336.0 184.56 L1339.0 184.58 L1342.0 184.59 L1345.0 184.60 L1348.0 184.61 L1351.0 184.62 L1354.0 184.64 L1357.0 184.65 L1360.0 184.66 L1363.0 184.67 L1366.0 184.68 L1369.0 184.70 L1372.0 184.71 L1375.0 184.72 L1378.0 184.73 L1381.0 184.74 L1384.0 184.76 L1387.0 184.77 L1390.0 184.78 L1393.0 184.79 L1396.0 184.80 L1399.0 184.82 L1402.0 184.83 L1405.0 184.84 L1408.0 184.85 L1411.0 184.86 L1414.0 184.87 L1417.0 184.88 L1420.0 184.88 L1423.0 184.88 L1426.0 184.88 L1429.0 184.87 L1432.0 184.86 L1435.0 184.85 L1438.0 184.84 L1441.0 184.83 L1444.0 184.82 L1447.0 184.81 L1450.0 184.80 L1453.0 184.79 L1456.0 184.78 L1459.0 184.77 L1462.0 184.76 L1465.0 184.75 L1468.0 184.74 L1471.0 184.73 L1474.0 184.72 L1477.0 184.71 L1480.0 184.70 L1483.0 184.69 L1486.0 184.68 L1489.0 184.67 L1492.0 184.66 L1495.0 184.65 L1498.0 184.64 L1501.0 184.63 L1504.0 184.62 L1507.0 184.61 L1510.0 184.60 L1513.0 184.59 L1516.0 184.58 L1519.0 184.57 L1522.0 184.56 L1525.0 184.55 L1528.0 184.54 L1531.0 184.53 L1534.0 184.51 L1537.0 184.48 L1540.0 184.44 L1543.1 184.39 L1546.2 184.34 L1549.2 184.27 L1552.3 184.19 L1555.4 184.12 L1558.5 184.04 L1561.5 183.96 L1564.6 183.88 L1567.7 183.81 L1570.8 183.73 L1573.8 183.65 L1576.9 183.58 L1580.0 183.50 L1583.0 183.42 L1586.0 183.34 L1589.0 183.26 L1592.0 183.18 L1595.0 183.10 L1598.0 183.02 L1601.0 182.94 L1604.0 182.86 L1607.0 182.78 L1610.0 182.70 L1613.0 182.62 L1616.0 182.54 L1619.0 182.46 L1622.0 182.38 L1625.0 182.30 L1628.0 182.22 L1631.0 182.14 L1634.0 182.06 L1637.0 181.99 L1640.0 181.92 L1643.0 181.86 L1646.0 181.79 L1649.0 181.73 L1652.0 181.68 L1655.0 181.62 L1658.0 181.57 L1661.0 181.52 L1664.0 181.46 L1667.0 181.41 L1670.0 181.35 L1673.0 181.30 L1676.0 181.24 L1679.0 181.19 L1682.0 181.13 L1685.0 181.08 L1688.0 181.02 L1691.0 180.97 L1694.0 180.92 L1697.0 180.88 L1700.0 180.85 L1703.0 180.82 L1706.0 180.81 L1709.0 180.80 L1712.0 180.80 L1715.0 180.83 L1718.0 180.89 L1721.0 180.97 L1724.0 181.09 L1727.0 181.23 L1730.0 181.40 L1733.0 181.60 L1736.0 181.82 L1739.0 182.06 L1742.0 182.33 L1745.1 182.61 L1748.1 182.92 L1751.2 183.25 L1754.2 183.60 L1757.3 183.95 L1760.4 184.30 L1763.4 184.65 L1766.5 185.00 L1769.6 185.35 L1772.6 185.70 L1775.7 186.05 L1778.8 186.40 L1781.8 186.75 L1784.9 187.09 L1787.9 187.41 L1791.0 187.72 L1794.1 188.03 L1797.1 188.31 L1800.2 188.59 L1803.2 188.85 L1806.3 189.11 L1809.4 189.38 L1812.4 189.64 L1815.5 189.90 L1818.6 190.16 L1821.6 190.42 L1824.7 190.69 L1827.8 190.95 L1830.8 191.21 L1833.9 191.50 L1836.9 191.80 L1840.0 192.12 L1843.2 192.47 L1846.3 192.84 L1849.5 193.22 L1852.7 193.63 L1855.8 194.04 L1859.0 194.45 L1862.2 194.86 L1865.3 195.27 L1868.5 195.68 L1871.7 196.11 L1874.8 196.58 L1878.0 197.07 L1881.1 197.59 L1884.1 198.14 L1887.2 198.72 L1890.3 199.33 L1893.3 199.93 L1896.4 200.54 L1899.5 201.15 L1902.5 201.75 L1905.6 202.36 L1908.7 202.97 L1911.7 203.57 L1914.8 204.18 L1917.9 204.77 L1920.9 205.36 L1924.0 205.92 L1927.0 206.48 L1930.0 207.02 L1933.0 207.55 L1936.0 208.07 L1939.0 208.59 L1942.0 209.11 L1945.0 209.62 L1948.0 210.14 L1951.0 210.66 L1954.0 211.18 L1957.0 211.69 L1960.0 212.21 L1963.0 212.73 L1966.0 213.25 L1969.0 213.76 L1972.0 214.28 L1975.0 214.80 L1975 215.8 Z" fill="#77aa66"/>
 <path d="M341 215.8 L341.0 199.00 L344.0 199.02 L347.1 199.03 L350.1 199.04 L353.2 199.05 L356.2 199.06 L359.2 199.07 L362.3 199.09 L365.3 199.10 L368.4 199.11 L371.4 199.12 L374.4 199.13 L377.5 199.15 L380.5 199.16 L383.6 199.17 L386.6 199.18 L389.7 199.20 L392.7 199.21 L395.7 199.22 L398.8 199.23 L401.8 199.24 L404.9 199.26 L407.9 199.27 L410.9 199.28 L414.0 199.29 L417.0 199.31 L420.1 199.32 L423.1 199.33 L426.1 199.34 L429.2 199.36 L432.2 199.37 L435.3 199.38 L438.3 199.39 L441.3 199.40 L444.4 199.42 L447.4 199.43 L450.5 199.44 L453.5 199.45 L456.6 199.47 L459.6 199.48 L462.6 199.49 L465.7 199.50 L468.7 199.51 L471.8 199.53 L474.8 199.54 L477.8 199.55 L480.9 199.56 L483.9 199.57 L487.0 199.58 L490.0 199.59 L493.0 199.60 L496.0 199.61 L499.1 199.61 L502.1 199.62 L505.1 199.62 L508.1 199.63 L511.2 199.63 L514.2 199.64 L517.2 199.64 L520.2 199.65 L523.3 199.65 L526.3 199.66 L529.3 199.66 L532.3 199.67 L535.3 199.67 L538.4 199.67 L541.4 199.68 L544.4 199.68 L547.4 199.69 L550.5 199.69 L553.5 199.70 L556.5 199.70 L559.5 199.71 L562.6 199.71 L565.6 199.72 L568.6 199.72 L571.6 199.73 L574.7 199.73 L577.7 199.73 L580.7 199.74 L583.7 199.74 L586.7 199.75 L589.8 199.75 L592.8 199.76 L595.8 199.76 L598.8 199.77 L601.9 199.77 L604.9 199.78 L607.9 199.78 L610.9 199.79 L614.0 199.78 L617.0 199.78 L620.0 199.76 L623.0 199.74 L626.0 199.71 L629.0 199.68 L632.0 199.64 L635.0 199.60 L638.0 199.56 L641.0 199.52 L644.0 199.48 L647.0 199.44 L650.0 199.40 L653.0 199.36 L656.0 199.32 L659.0 199.28 L662.0 199.24 L665.0 199.20 L668.0 199.16 L671.0 199.12 L674.0 199.08 L677.0 199.05 L680.0 199.01 L683.1 198.98 L686.2 198.95 L689.2 198.92 L692.3 198.89 L695.4 198.87 L698.5 198.84 L701.5 198.81 L704.6 198.78 L707.7 198.76 L710.8 198.73 L713.8 198.70 L716.9 198.68 L720.0 198.65 L723.1 198.62 L726.2 198.60 L729.2 198.57 L732.3 198.54 L735.4 198.52 L738.5 198.49 L741.5 198.46 L744.6 198.43 L747.7 198.41 L750.8 198.38 L753.8 198.36 L756.9 198.34 L760.0 198.32 L763.0 198.31 L766.0 198.31 L769.0 198.30 L772.0 198.31 L775.0 198.31 L778.0 198.31 L781.0 198.31 L784.0 198.31 L787.0 198.31 L790.0 198.31 L793.0 198.31 L796.0 198.31 L799.0 198.32 L802.0 198.32 L805.0 198.32 L808.0 198.32 L811.0 198.32 L814.0 198.32 L817.0 198.32 L820.0 198.33 L823.0 198.33 L826.0 198.33 L829.0 198.33 L832.0 198.33 L835.0 198.33 L838.0 198.33 L841.0 198.33 L844.0 198.34 L847.0 198.34 L850.0 198.34 L853.0 198.34 L856.0 198.34 L859.0 198.34 L862.0 198.34 L865.0 198.34 L868.0 198.34 L871.0 198.35 L874.0 198.35 L877.0 198.35 L880.0 198.35 L883.0 198.35 L886.0 198.35 L889.0 198.35 L892.0 198.36 L895.0 198.36 L898.0 198.36 L901.0 198.36 L904.0 198.36 L907.0 198.36 L910.0 198.36 L913.0 198.36 L916.0 198.37 L919.0 198.37 L922.0 198.37 L925.0 198.37 L928.0 198.37 L931.0 198.37 L934.0 198.37 L937.0 198.37 L940.0 198.38 L943.0 198.38 L946.0 198.38 L949.0 198.38 L952.0 198.38 L955.0 198.38 L958.0 198.38 L961.0 198.38 L964.0 198.39 L967.0 198.39 L970.0 198.39 L973.0 198.39 L976.0 198.39 L979.0 198.39 L982.0 198.39 L985.0 198.39 L988.0 198.40 L991.0 198.40 L994.0 198.40 L997.0 198.40 L1000.0 198.39 L1003.0 198.39 L1006.0 198.39 L1009.0 198.38 L1012.0 198.38 L1015.0 198.38 L1018.0 198.37 L1021.0 198.37 L1024.0 198.36 L1027.0 198.36 L1030.0 198.35 L1033.0 198.34 L1036.0 198.34 L1039.0 198.34 L1042.0 198.33 L1045.0 198.33 L1048.0 198.32 L1051.0 198.31 L1054.0 198.31 L1057.0 198.31 L1060.0 198.30 L1063.0 198.30 L1066.0 198.29 L1069.0 198.28 L1072.0 198.28 L1075.0 198.28 L1078.0 198.27 L1081.0 198.27 L1084.0 198.26 L1087.0 198.25 L1090.0 198.25 L1093.0 198.24 L1096.0 198.24 L1099.0 198.23 L1102.0 198.23 L1105.0 198.22 L1108.0 198.22 L1111.0 198.21 L1114.0 198.21 L1117.0 198.21 L1120.0 198.21 L1123.0 198.21 L1126.1 198.21 L1129.1 198.21 L1132.2 198.22 L1135.2 198.22 L1138.3 198.23 L1141.3 198.23 L1144.3 198.23 L1147.4 198.24 L1150.4 198.24 L1153.5 198.25 L1156.5 198.25 L1159.6 198.26 L1162.6 198.26 L1165.7 198.27 L1168.7 198.27 L1171.7 198.27 L1174.8 198.28 L1177.8 198.28 L1180.9 198.29 L1183.9 198.29 L1187.0 198.30 L1190.0 198.30 L1193.0 198.30 L1196.1 198.31 L1199.1 198.31 L1202.2 198.32 L1205.2 198.32 L1208.3 198.33 L1211.3 198.33 L1214.3 198.33 L1217.4 198.34 L1220.4 198.34 L1223.5 198.35 L1226.5 198.35 L1229.6 198.36 L1232.6 198.36 L1235.7 198.37 L1238.7 198.37 L1241.7 198.37 L1244.8 198.38 L1247.8 198.38 L1250.9 198.39 L1253.9 198.39 L1257.0 198.41 L1260.0 198.42 L1263.0 198.44 L1266.0 198.46 L1269.1 198.48 L1272.1 198.51 L1275.1 198.53 L1278.1 198.56 L1281.1 198.58 L1284.2 198.61 L1287.2 198.64 L1290.2 198.66 L1293.2 198.69 L1296.2 198.72 L1299.2 198.74 L1302.3 198.77 L1305.3 198.80 L1308.3 198.82 L1311.3 198.85 L1314.3 198.88 L1317.4 198.90 L1320.4 198.93 L1323.4 198.95 L1326.4 198.98 L1329.4 199.01 L1332.5 199.03 L1335.5 199.06 L1338.5 199.09 L1341.5 199.11 L1344.5 199.14 L1347.5 199.17 L1350.6 199.19 L1353.6 199.22 L1356.6 199.25 L1359.6 199.27 L1362.6 199.30 L1365.7 199.32 L1368.7 199.35 L1371.7 199.38 L1374.7 199.40 L1377.7 199.43 L1380.8 199.46 L1383.8 199.48 L1386.8 199.51 L1389.8 199.54 L1392.8 199.56 L1395.8 199.59 L1398.9 199.62 L1401.9 199.64 L1404.9 199.67 L1407.9 199.69 L1410.9 199.72 L1414.0 199.74 L1417.0 199.76 L1420.0 199.77 L1423.0 199.78 L1426.0 199.79 L1429.0 199.79 L1432.0 199.78 L1435.0 199.78 L1438.0 199.77 L1441.0 199.77 L1444.0 199.76 L1447.0 199.76 L1450.0 199.75 L1453.0 199.75 L1456.0 199.74 L1459.0 199.73 L1462.0 199.73 L1465.0 199.72 L1468.0 199.72 L1471.0 199.72 L1474.0 199.71 L1477.0 199.70 L1480.0 199.70 L1483.0 199.69 L1486.0 199.69 L1489.0 199.69 L1492.0 199.68 L1495.0 199.67 L1498.0 199.67 L1501.0 199.66 L1504.0 199.66 L1507.0 199.66 L1510.0 199.65 L1513.0 199.64 L1516.0 199.64 L1519.0 199.63 L1522.0 199.63 L1525.0 199.62 L1528.0 199.62 L1531.0 199.62 L1534.0 199.60 L1537.0 199.57 L1540.0 199.54 L1543.1 199.49 L1546.2 199.44 L1549.2 199.37 L1552.3 199.29 L1555.4 199.22 L1558.5 199.14 L1561.5 199.06 L1564.6 198.98 L1567.7 198.91 L1570.8 198.83 L1573.8 198.75 L1576.9 198.68 L1580.0 198.60 L1583.1 198.52 L1586.2 198.45 L1589.2 198.37 L1592.3 198.29 L1595.4 198.22 L1598.5 198.14 L1601.5 198.06 L1604.6 197.98 L1607.7 197.91 L1610.8 197.83 L1613.8 197.76 L1616.9 197.69 L1620.0 197.62 L1623.1 197.56 L1626.2 197.50 L1629.2 197.44 L1632.3 197.38 L1635.4 197.33 L1638.5 197.28 L1641.5 197.22 L1644.6 197.17 L1647.7 197.12 L1650.8 197.06 L1653.8 197.01 L1656.9 196.95 L1660.0 196.90 L1663.1 196.85 L1666.2 196.79 L1669.2 196.74 L1672.3 196.68 L1675.4 196.63 L1678.5 196.58 L1681.5 196.52 L1684.6 196.47 L1687.7 196.42 L1690.8 196.36 L1693.8 196.33 L1696.9 196.31 L1700.0 196.31 L1703.0 196.33 L1706.0 196.36 L1709.0 196.41 L1712.0 196.49 L1715.0 196.56 L1718.0 196.63 L1721.0 196.70 L1724.0 196.77 L1727.0 196.84 L1730.0 196.91 L1733.0 196.99 L1736.0 197.07 L1739.0 197.16 L1742.0 197.27 L1745.1 197.39 L1748.1 197.52 L1751.2 197.67 L1754.2 197.82 L1757.3 197.98 L1760.4 198.14 L1763.4 198.29 L1766.5 198.45 L1769.6 198.61 L1772.6 198.76 L1775.7 198.92 L1778.8 199.07 L1781.8 199.23 L1784.9 199.39 L1787.9 199.55 L1791.0 199.72 L1794.1 199.88 L1797.1 200.05 L1800.2 200.22 L1803.2 200.40 L1806.3 200.57 L1809.4 200.75 L1812.4 200.92 L1815.5 201.10 L1818.6 201.28 L1821.6 201.45 L1824.7 201.62 L1827.8 201.80 L1830.8 201.97 L1833.9 202.17 L1836.9 202.38 L1840.0 202.60 L1843.2 202.84 L1846.3 203.10 L1849.5 203.38 L1852.7 203.67 L1855.8 203.96 L1859.0 204.25 L1862.2 204.54 L1865.3 204.83 L1868.5 205.12 L1871.7 205.41 L1874.8 205.68 L1878.0 205.95 L1881.1 206.21 L1884.1 206.46 L1887.2 206.70 L1890.3 206.93 L1893.3 207.17 L1896.4 207.40 L1899.5 207.63 L1902.5 207.87 L1905.6 208.10 L1908.7 208.33 L1911.7 208.57 L1914.8 208.80 L1917.9 209.05 L1920.9 209.31 L1924.0 209.58 L1927.0 209.86 L1930.0 210.16 L1933.0 210.47 L1936.0 210.79 L1939.0 211.12 L1942.0 211.44 L1945.0 211.76 L1948.0 212.09 L1951.0 212.41 L1954.0 212.74 L1957.0 213.06 L1960.0 213.38 L1963.0 213.71 L1966.0 214.03 L1969.0 214.35 L1972.0 214.68 L1975.0 215.00 L1975 215.8 Z" fill="#e8893d"/>
 <path d="M341 215.8 L341.0 201.40 L344.0 201.42 L347.1 201.43 L350.1 201.44 L353.2 201.45 L356.2 201.46 L359.2 201.47 L362.3 201.49 L365.3 201.50 L368.4 201.51 L371.4 201.52 L374.4 201.53 L377.5 201.55 L380.5 201.56 L383.6 201.57 L386.6 201.58 L389.7 201.60 L392.7 201.61 L395.7 201.62 L398.8 201.63 L401.8 201.64 L404.9 201.66 L407.9 201.67 L410.9 201.68 L414.0 201.69 L417.0 201.71 L420.1 201.72 L423.1 201.73 L426.1 201.74 L429.2 201.76 L432.2 201.77 L435.3 201.78 L438.3 201.79 L441.3 201.80 L444.4 201.82 L447.4 201.83 L450.5 201.84 L453.5 201.85 L456.6 201.87 L459.6 201.88 L462.6 201.89 L465.7 201.90 L468.7 201.91 L471.8 201.93 L474.8 201.94 L477.8 201.95 L480.9 201.96 L483.9 201.97 L487.0 201.98 L490.0 201.99 L493.0 202.00 L496.0 202.01 L499.1 202.01 L502.1 202.02 L505.1 202.02 L508.1 202.03 L511.2 202.03 L514.2 202.04 L517.2 202.04 L520.2 202.05 L523.3 202.05 L526.3 202.06 L529.3 202.06 L532.3 202.07 L535.3 202.07 L538.4 202.07 L541.4 202.08 L544.4 202.08 L547.4 202.09 L550.5 202.09 L553.5 202.10 L556.5 202.10 L559.5 202.11 L562.6 202.11 L565.6 202.12 L568.6 202.12 L571.6 202.13 L574.7 202.13 L577.7 202.13 L580.7 202.14 L583.7 202.14 L586.7 202.15 L589.8 202.15 L592.8 202.16 L595.8 202.16 L598.8 202.17 L601.9 202.17 L604.9 202.18 L607.9 202.18 L610.9 202.19 L614.0 202.18 L617.0 202.18 L620.0 202.16 L623.0 202.14 L626.0 202.11 L629.0 202.08 L632.0 202.04 L635.0 202.00 L638.0 201.96 L641.0 201.92 L644.0 201.88 L647.0 201.84 L650.0 201.80 L653.0 201.76 L656.0 201.72 L659.0 201.68 L662.0 201.64 L665.0 201.60 L668.0 201.56 L671.0 201.52 L674.0 201.48 L677.0 201.45 L680.0 201.41 L683.1 201.38 L686.2 201.35 L689.2 201.32 L692.3 201.29 L695.4 201.27 L698.5 201.24 L701.5 201.21 L704.6 201.18 L707.7 201.16 L710.8 201.13 L713.8 201.10 L716.9 201.08 L720.0 201.05 L723.1 201.02 L726.2 201.00 L729.2 200.97 L732.3 200.94 L735.4 200.92 L738.5 200.89 L741.5 200.86 L744.6 200.83 L747.7 200.81 L750.8 200.78 L753.8 200.76 L756.9 200.74 L760.0 200.72 L763.0 200.71 L766.0 200.71 L769.0 200.70 L772.0 200.71 L775.0 200.71 L778.0 200.71 L781.0 200.71 L784.0 200.71 L787.0 200.71 L790.0 200.71 L793.0 200.71 L796.0 200.72 L799.0 200.72 L802.0 200.72 L805.0 200.72 L808.0 200.72 L811.0 200.72 L814.0 200.72 L817.0 200.72 L820.0 200.73 L823.0 200.73 L826.0 200.73 L829.0 200.73 L832.0 200.73 L835.0 200.73 L838.0 200.73 L841.0 200.73 L844.0 200.74 L847.0 200.74 L850.0 200.74 L853.0 200.74 L856.0 200.74 L859.0 200.74 L862.0 200.74 L865.0 200.74 L868.0 200.75 L871.0 200.75 L874.0 200.75 L877.0 200.75 L880.0 200.75 L883.0 200.75 L886.0 200.75 L889.0 200.75 L892.0 200.76 L895.0 200.76 L898.0 200.76 L901.0 200.76 L904.0 200.76 L907.0 200.76 L910.0 200.76 L913.0 200.76 L916.0 200.77 L919.0 200.77 L922.0 200.77 L925.0 200.77 L928.0 200.77 L931.0 200.77 L934.0 200.77 L937.0 200.77 L940.0 200.78 L943.0 200.78 L946.0 200.78 L949.0 200.78 L952.0 200.78 L955.0 200.78 L958.0 200.78 L961.0 200.78 L964.0 200.79 L967.0 200.79 L970.0 200.79 L973.0 200.79 L976.0 200.79 L979.0 200.79 L982.0 200.79 L985.0 200.79 L988.0 200.80 L991.0 200.80 L994.0 200.80 L997.0 200.80 L1000.0 200.79 L1003.0 200.79 L1006.0 200.79 L1009.0 200.78 L1012.0 200.78 L1015.0 200.78 L1018.0 200.77 L1021.0 200.77 L1024.0 200.76 L1027.0 200.76 L1030.0 200.75 L1033.0 200.75 L1036.0 200.74 L1039.0 200.74 L1042.0 200.73 L1045.0 200.73 L1048.0 200.72 L1051.0 200.72 L1054.0 200.71 L1057.0 200.71 L1060.0 200.70 L1063.0 200.70 L1066.0 200.69 L1069.0 200.69 L1072.0 200.68 L1075.0 200.68 L1078.0 200.67 L1081.0 200.67 L1084.0 200.66 L1087.0 200.65 L1090.0 200.65 L1093.0 200.64 L1096.0 200.64 L1099.0 200.63 L1102.0 200.63 L1105.0 200.62 L1108.0 200.62 L1111.0 200.61 L1114.0 200.61 L1117.0 200.61 L1120.0 200.61 L1123.0 200.61 L1126.1 200.61 L1129.1 200.61 L1132.2 200.62 L1135.2 200.62 L1138.3 200.63 L1141.3 200.63 L1144.3 200.63 L1147.4 200.64 L1150.4 200.64 L1153.5 200.65 L1156.5 200.65 L1159.6 200.66 L1162.6 200.66 L1165.7 200.67 L1168.7 200.67 L1171.7 200.67 L1174.8 200.68 L1177.8 200.68 L1180.9 200.69 L1183.9 200.69 L1187.0 200.70 L1190.0 200.70 L1193.0 200.70 L1196.1 200.71 L1199.1 200.71 L1202.2 200.72 L1205.2 200.72 L1208.3 200.73 L1211.3 200.73 L1214.3 200.73 L1217.4 200.74 L1220.4 200.74 L1223.5 200.75 L1226.5 200.75 L1229.6 200.76 L1232.6 200.76 L1235.7 200.77 L1238.7 200.77 L1241.7 200.77 L1244.8 200.78 L1247.8 200.78 L1250.9 200.79 L1253.9 200.79 L1257.0 200.81 L1260.0 200.82 L1263.0 200.84 L1266.0 200.86 L1269.1 200.88 L1272.1 200.91 L1275.1 200.93 L1278.1 200.96 L1281.1 200.98 L1284.2 201.01 L1287.2 201.04 L1290.2 201.06 L1293.2 201.09 L1296.2 201.12 L1299.2 201.14 L1302.3 201.17 L1305.3 201.20 L1308.3 201.22 L1311.3 201.25 L1314.3 201.28 L1317.4 201.30 L1320.4 201.33 L1323.4 201.35 L1326.4 201.38 L1329.4 201.41 L1332.5 201.43 L1335.5 201.46 L1338.5 201.49 L1341.5 201.51 L1344.5 201.54 L1347.5 201.57 L1350.6 201.59 L1353.6 201.62 L1356.6 201.65 L1359.6 201.67 L1362.6 201.70 L1365.7 201.72 L1368.7 201.75 L1371.7 201.78 L1374.7 201.80 L1377.7 201.83 L1380.8 201.86 L1383.8 201.88 L1386.8 201.91 L1389.8 201.94 L1392.8 201.96 L1395.8 201.99 L1398.9 202.02 L1401.9 202.04 L1404.9 202.07 L1407.9 202.09 L1410.9 202.12 L1414.0 202.14 L1417.0 202.16 L1420.0 202.17 L1423.0 202.18 L1426.0 202.19 L1429.0 202.19 L1432.0 202.18 L1435.0 202.18 L1438.0 202.17 L1441.0 202.17 L1444.0 202.16 L1447.0 202.16 L1450.0 202.15 L1453.0 202.15 L1456.0 202.14 L1459.0 202.13 L1462.0 202.13 L1465.0 202.12 L1468.0 202.12 L1471.0 202.12 L1474.0 202.11 L1477.0 202.10 L1480.0 202.10 L1483.0 202.09 L1486.0 202.09 L1489.0 202.09 L1492.0 202.08 L1495.0 202.07 L1498.0 202.07 L1501.0 202.06 L1504.0 202.06 L1507.0 202.06 L1510.0 202.05 L1513.0 202.04 L1516.0 202.04 L1519.0 202.03 L1522.0 202.03 L1525.0 202.03 L1528.0 202.02 L1531.0 202.02 L1534.0 202.00 L1537.0 201.97 L1540.0 201.94 L1543.1 201.89 L1546.2 201.84 L1549.2 201.77 L1552.3 201.69 L1555.4 201.62 L1558.5 201.54 L1561.5 201.46 L1564.6 201.38 L1567.7 201.31 L1570.8 201.23 L1573.8 201.15 L1576.9 201.08 L1580.0 201.00 L1583.1 200.92 L1586.2 200.85 L1589.2 200.77 L1592.3 200.69 L1595.4 200.62 L1598.5 200.54 L1601.5 200.46 L1604.6 200.38 L1607.7 200.31 L1610.8 200.23 L1613.8 200.16 L1616.9 200.09 L1620.0 200.02 L1623.1 199.96 L1626.2 199.90 L1629.2 199.84 L1632.3 199.78 L1635.4 199.73 L1638.5 199.68 L1641.5 199.62 L1644.6 199.57 L1647.7 199.52 L1650.8 199.46 L1653.8 199.41 L1656.9 199.35 L1660.0 199.30 L1663.1 199.25 L1666.2 199.19 L1669.2 199.14 L1672.3 199.08 L1675.4 199.03 L1678.5 198.98 L1681.5 198.92 L1684.6 198.87 L1687.7 198.82 L1690.8 198.76 L1693.8 198.73 L1696.9 198.71 L1700.0 198.71 L1703.0 198.73 L1706.0 198.76 L1709.0 198.81 L1712.0 198.89 L1715.0 198.96 L1718.0 199.03 L1721.0 199.10 L1724.0 199.17 L1727.0 199.24 L1730.0 199.31 L1733.0 199.39 L1736.0 199.47 L1739.0 199.56 L1742.0 199.67 L1745.1 199.79 L1748.1 199.92 L1751.2 200.07 L1754.2 200.22 L1757.3 200.38 L1760.4 200.54 L1763.4 200.69 L1766.5 200.85 L1769.6 201.01 L1772.6 201.16 L1775.7 201.32 L1778.8 201.47 L1781.8 201.63 L1784.9 201.79 L1787.9 201.95 L1791.0 202.12 L1794.1 202.28 L1797.1 202.45 L1800.2 202.62 L1803.2 202.80 L1806.3 202.97 L1809.4 203.15 L1812.4 203.32 L1815.5 203.50 L1818.6 203.68 L1821.6 203.85 L1824.7 204.03 L1827.8 204.20 L1830.8 204.38 L1833.9 204.57 L1836.9 204.78 L1840.0 205.00 L1843.2 205.24 L1846.3 205.50 L1849.5 205.78 L1852.7 206.07 L1855.8 206.36 L1859.0 206.65 L1862.2 206.94 L1865.3 207.23 L1868.5 207.53 L1871.7 207.81 L1874.8 208.08 L1878.0 208.35 L1881.1 208.61 L1884.1 208.86 L1887.2 209.10 L1890.3 209.33 L1893.3 209.57 L1896.4 209.80 L1899.5 210.03 L1902.5 210.19 L1905.6 210.32 L1908.7 210.46 L1911.7 210.59 L1914.8 210.73 L1917.9 210.87 L1920.9 211.04 L1924.0 211.21 L1927.0 211.40 L1930.0 211.60 L1933.0 211.81 L1936.0 212.04 L1939.0 212.27 L1942.0 212.50 L1945.0 212.72 L1948.0 212.95 L1951.0 213.18 L1954.0 213.41 L1957.0 213.63 L1960.0 213.86 L1963.0 214.09 L1966.0 214.32 L1969.0 214.54 L1972.0 214.77 L1975.0 215.00 L1975 215.8 Z" fill="#7699d6"/>
 <path d="M341.0 202.00 L344.0 202.02 L347.1 202.03 L350.1 202.04 L353.2 202.05 L356.2 202.06 L359.2 202.07 L362.3 202.09 L365.3 202.10 L368.4 202.11 L371.4 202.12 L374.4 202.13 L377.5 202.15 L380.5 202.16 L383.6 202.17 L386.6 202.18 L389.7 202.20 L392.7 202.21 L395.7 202.22 L398.8 202.23 L401.8 202.24 L404.9 202.26 L407.9 202.27 L410.9 202.28 L414.0 202.29 L417.0 202.31 L420.1 202.32 L423.1 202.33 L426.1 202.34 L429.2 202.36 L432.2 202.37 L435.3 202.38 L438.3 202.39 L441.3 202.40 L444.4 202.42 L447.4 202.43 L450.5 202.44 L453.5 202.45 L456.6 202.47 L459.6 202.48 L462.6 202.49 L465.7 202.50 L468.7 202.51 L471.8 202.53 L474.8 202.54 L477.8 202.55 L480.9 202.56 L483.9 202.57 L487.0 202.58 L490.0 202.59 L493.0 202.60 L496.0 202.61 L499.1 202.61 L502.1 202.62 L505.1 202.62 L508.1 202.63 L511.2 202.63 L514.2 202.64 L517.2 202.64 L520.2 202.65 L523.3 202.65 L526.3 202.66 L529.3 202.66 L532.3 202.67 L535.3 202.67 L538.4 202.67 L541.4 202.68 L544.4 202.68 L547.4 202.69 L550.5 202.69 L553.5 202.70 L556.5 202.70 L559.5 202.71 L562.6 202.71 L565.6 202.72 L568.6 202.72 L571.6 202.73 L574.7 202.73 L577.7 202.73 L580.7 202.74 L583.7 202.74 L586.7 202.75 L589.8 202.75 L592.8 202.76 L595.8 202.76 L598.8 202.77 L601.9 202.77 L604.9 202.78 L607.9 202.78 L610.9 202.79 L614.0 202.78 L617.0 202.78 L620.0 202.76 L623.0 202.74 L626.0 202.71 L629.0 202.68 L632.0 202.64 L635.0 202.60 L638.0 202.56 L641.0 202.52 L644.0 202.48 L647.0 202.44 L650.0 202.40 L653.0 202.36 L656.0 202.32 L659.0 202.28 L662.0 202.24 L665.0 202.20 L668.0 202.16 L671.0 202.12 L674.0 202.08 L677.0 202.05 L680.0 202.01 L683.1 201.98 L686.2 201.95 L689.2 201.92 L692.3 201.89 L695.4 201.87 L698.5 201.84 L701.5 201.81 L704.6 201.78 L707.7 201.76 L710.8 201.73 L713.8 201.70 L716.9 201.68 L720.0 201.65 L723.1 201.62 L726.2 201.60 L729.2 201.57 L732.3 201.54 L735.4 201.52 L738.5 201.49 L741.5 201.46 L744.6 201.43 L747.7 201.41 L750.8 201.38 L753.8 201.36 L756.9 201.34 L760.0 201.32 L763.0 201.31 L766.0 201.31 L769.0 201.30 L772.0 201.31 L775.0 201.31 L778.0 201.31 L781.0 201.31 L784.0 201.31 L787.0 201.31 L790.0 201.31 L793.0 201.31 L796.0 201.31 L799.0 201.32 L802.0 201.32 L805.0 201.32 L808.0 201.32 L811.0 201.32 L814.0 201.32 L817.0 201.32 L820.0 201.33 L823.0 201.33 L826.0 201.33 L829.0 201.33 L832.0 201.33 L835.0 201.33 L838.0 201.33 L841.0 201.33 L844.0 201.34 L847.0 201.34 L850.0 201.34 L853.0 201.34 L856.0 201.34 L859.0 201.34 L862.0 201.34 L865.0 201.34 L868.0 201.34 L871.0 201.35 L874.0 201.35 L877.0 201.35 L880.0 201.35 L883.0 201.35 L886.0 201.35 L889.0 201.35 L892.0 201.36 L895.0 201.36 L898.0 201.36 L901.0 201.36 L904.0 201.36 L907.0 201.36 L910.0 201.36 L913.0 201.36 L916.0 201.37 L919.0 201.37 L922.0 201.37 L925.0 201.37 L928.0 201.37 L931.0 201.37 L934.0 201.37 L937.0 201.37 L940.0 201.38 L943.0 201.38 L946.0 201.38 L949.0 201.38 L952.0 201.38 L955.0 201.38 L958.0 201.38 L961.0 201.38 L964.0 201.39 L967.0 201.39 L970.0 201.39 L973.0 201.39 L976.0 201.39 L979.0 201.39 L982.0 201.39 L985.0 201.39 L988.0 201.40 L991.0 201.40 L994.0 201.40 L997.0 201.40 L1000.0 201.39 L1003.0 201.39 L1006.0 201.39 L1009.0 201.38 L1012.0 201.38 L1015.0 201.38 L1018.0 201.37 L1021.0 201.37 L1024.0 201.36 L1027.0 201.36 L1030.0 201.35 L1033.0 201.34 L1036.0 201.34 L1039.0 201.34 L1042.0 201.33 L1045.0 201.33 L1048.0 201.32 L1051.0 201.31 L1054.0 201.31 L1057.0 201.31 L1060.0 201.30 L1063.0 201.30 L1066.0 201.29 L1069.0 201.28 L1072.0 201.28 L1075.0 201.28 L1078.0 201.27 L1081.0 201.27 L1084.0 201.26 L1087.0 201.25 L1090.0 201.25 L1093.0 201.24 L1096.0 201.24 L1099.0 201.23 L1102.0 201.23 L1105.0 201.22 L1108.0 201.22 L1111.0 201.21 L1114.0 201.21 L1117.0 201.21 L1120.0 201.21 L1123.0 201.21 L1126.1 201.21 L1129.1 201.21 L1132.2 201.22 L1135.2 201.22 L1138.3 201.23 L1141.3 201.23 L1144.3 201.23 L1147.4 201.24 L1150.4 201.24 L1153.5 201.25 L1156.5 201.25 L1159.6 201.26 L1162.6 201.26 L1165.7 201.27 L1168.7 201.27 L1171.7 201.27 L1174.8 201.28 L1177.8 201.28 L1180.9 201.29 L1183.9 201.29 L1187.0 201.30 L1190.0 201.30 L1193.0 201.30 L1196.1 201.31 L1199.1 201.31 L1202.2 201.32 L1205.2 201.32 L1208.3 201.33 L1211.3 201.33 L1214.3 201.33 L1217.4 201.34 L1220.4 201.34 L1223.5 201.35 L1226.5 201.35 L1229.6 201.36 L1232.6 201.36 L1235.7 201.37 L1238.7 201.37 L1241.7 201.37 L1244.8 201.38 L1247.8 201.38 L1250.9 201.39 L1253.9 201.39 L1257.0 201.41 L1260.0 201.42 L1263.0 201.44 L1266.0 201.46 L1269.1 201.48 L1272.1 201.51 L1275.1 201.53 L1278.1 201.56 L1281.1 201.58 L1284.2 201.61 L1287.2 201.64 L1290.2 201.66 L1293.2 201.69 L1296.2 201.72 L1299.2 201.74 L1302.3 201.77 L1305.3 201.80 L1308.3 201.82 L1311.3 201.85 L1314.3 201.88 L1317.4 201.90 L1320.4 201.93 L1323.4 201.95 L1326.4 201.98 L1329.4 202.01 L1332.5 202.03 L1335.5 202.06 L1338.5 202.09 L1341.5 202.11 L1344.5 202.14 L1347.5 202.17 L1350.6 202.19 L1353.6 202.22 L1356.6 202.25 L1359.6 202.27 L1362.6 202.30 L1365.7 202.32 L1368.7 202.35 L1371.7 202.38 L1374.7 202.40 L1377.7 202.43 L1380.8 202.46 L1383.8 202.48 L1386.8 202.51 L1389.8 202.54 L1392.8 202.56 L1395.8 202.59 L1398.9 202.62 L1401.9 202.64 L1404.9 202.67 L1407.9 202.69 L1410.9 202.72 L1414.0 202.74 L1417.0 202.76 L1420.0 202.77 L1423.0 202.78 L1426.0 202.79 L1429.0 202.79 L1432.0 202.78 L1435.0 202.78 L1438.0 202.77 L1441.0 202.77 L1444.0 202.76 L1447.0 202.76 L1450.0 202.75 L1453.0 202.75 L1456.0 202.74 L1459.0 202.73 L1462.0 202.73 L1465.0 202.72 L1468.0 202.72 L1471.0 202.72 L1474.0 202.71 L1477.0 202.70 L1480.0 202.70 L1483.0 202.69 L1486.0 202.69 L1489.0 202.69 L1492.0 202.68 L1495.0 202.67 L1498.0 202.67 L1501.0 202.66 L1504.0 202.66 L1507.0 202.66 L1510.0 202.65 L1513.0 202.64 L1516.0 202.64 L1519.0 202.63 L1522.0 202.63 L1525.0 202.62 L1528.0 202.62 L1531.0 202.62 L1534.0 202.60 L1537.0 202.57 L1540.0 202.54 L1543.1 202.49 L1546.2 202.44 L1549.2 202.37 L1552.3 202.29 L1555.4 202.22 L1558.5 202.14 L1561.5 202.06 L1564.6 201.98 L1567.7 201.91 L1570.8 201.83 L1573.8 201.75 L1576.9 201.68 L1580.0 201.60 L1583.1 201.52 L1586.2 201.45 L1589.2 201.37 L1592.3 201.29 L1595.4 201.22 L1598.5 201.14 L1601.5 201.06 L1604.6 200.98 L1607.7 200.91 L1610.8 200.83 L1613.8 200.76 L1616.9 200.69 L1620.0 200.62 L1623.1 200.56 L1626.2 200.50 L1629.2 200.44 L1632.3 200.38 L1635.4 200.33 L1638.5 200.28 L1641.5 200.22 L1644.6 200.17 L1647.7 200.12 L1650.8 200.06 L1653.8 200.01 L1656.9 199.95 L1660.0 199.90 L1663.1 199.85 L1666.2 199.79 L1669.2 199.74 L1672.3 199.68 L1675.4 199.63 L1678.5 199.58 L1681.5 199.52 L1684.6 199.47 L1687.7 199.42 L1690.8 199.36 L1693.8 199.33 L1696.9 199.31 L1700.0 199.31 L1703.0 199.33 L1706.0 199.36 L1709.0 199.41 L1712.0 199.49 L1715.0 199.56 L1718.0 199.63 L1721.0 199.70 L1724.0 199.77 L1727.0 199.84 L1730.0 199.91 L1733.0 199.99 L1736.0 200.07 L1739.0 200.16 L1742.0 200.27 L1745.1 200.39 L1748.1 200.52 L1751.2 200.67 L1754.2 200.82 L1757.3 200.98 L1760.4 201.14 L1763.4 201.29 L1766.5 201.45 L1769.6 201.61 L1772.6 201.76 L1775.7 201.92 L1778.8 202.07 L1781.8 202.23 L1784.9 202.39 L1787.9 202.55 L1791.0 202.72 L1794.1 202.88 L1797.1 203.05 L1800.2 203.22 L1803.2 203.40 L1806.3 203.57 L1809.4 203.75 L1812.4 203.92 L1815.5 204.10 L1818.6 204.28 L1821.6 204.45 L1824.7 204.62 L1827.8 204.80 L1830.8 204.97 L1833.9 205.17 L1836.9 205.38 L1840.0 205.60 L1843.2 205.84 L1846.3 206.10 L1849.5 206.38 L1852.7 206.67 L1855.8 206.96 L1859.0 207.25 L1862.2 207.54 L1865.3 207.83 L1868.5 208.12 L1871.7 208.41 L1874.8 208.68 L1878.0 208.95 L1881.1 209.21 L1884.1 209.46 L1887.2 209.70 L1890.3 209.93 L1893.3 210.17 L1896.4 210.40 L1899.5 210.63 L1902.5 210.77 L1905.6 210.88 L1908.7 210.99 L1911.7 211.10 L1914.8 211.21 L1917.9 211.33 L1920.9 211.47 L1924.0 211.62 L1927.0 211.78 L1930.0 211.96 L1933.0 212.15 L1936.0 212.35 L1939.0 212.56 L1942.0 212.76 L1945.0 212.96 L1948.0 213.17 L1951.0 213.37 L1954.0 213.58 L1957.0 213.78 L1960.0 213.98 L1963.0 214.19 L1966.0 214.39 L1969.0 214.59 L1972.0 214.80 L1975.0 215.00" fill="none" stroke="#6b9de8" stroke-width="1.1"/>
</svg>
<div class="t" style="left:446.5px;width:60px;text-align:center;top:226px;font-size:9.5px;color:#666666;">12. Feb</div>
<div class="t" style="left:680.0px;width:60px;text-align:center;top:226px;font-size:9.5px;color:#666666;">13. Feb</div>
<div class="t" style="left:913.5px;width:60px;text-align:center;top:226px;font-size:9.5px;color:#666666;">14. Feb</div>
<div class="t" style="left:1147.0px;width:60px;text-align:center;top:226px;font-size:9.5px;color:#666666;">15. Feb</div>
<div class="t" style="left:1380.5px;width:60px;text-align:center;top:226px;font-size:9.5px;color:#666666;">16. Feb</div>
<div class="t" style="left:1614.0px;width:60px;text-align:center;top:226px;font-size:9.5px;color:#666666;">17. Feb</div>
<div class="t" style="left:1847.5px;width:60px;text-align:center;top:226px;font-size:9.5px;color:#666666;">18. Feb</div>
<div class="a" style="left:1000.5px;top:252.90000000000003px;width:6.4px;height:6.4px;border-radius:50%;background:#6b9be6"></div>
<div class="t" style="left:1011.25px;top:251px;font-size:10.5px;color:#77757c;">Blocked</div>
<div class="a" style="left:1064.1px;top:252.90000000000003px;width:6.4px;height:6.4px;border-radius:50%;background:#e8893d"></div>
<div class="t" style="left:1075.1px;top:251px;font-size:10.5px;color:#77757c;">Monitored</div>
<div class="a" style="left:1140.5px;top:252.90000000000003px;width:6.4px;height:6.4px;border-radius:50%;background:#6aa85c"></div>
<div class="t" style="left:1151.25px;top:251px;font-size:10.5px;color:#77757c;">Allowed</div>
<div class="a" style="left:1204.3999999999999px;top:252.90000000000003px;width:6.4px;height:6.4px;border-radius:50%;background:#a7a7a7"></div>
<div class="t" style="left:1215.1px;top:251px;font-size:10.5px;color:#77757c;">Passed</div>
<div class="a" style="left:273px;top:296px;width:1703px;height:720px;background:#fff;border:1px solid #e4e3e8;border-radius:6px;"></div>
<div class="a" style="left:289px;top:312px;width:268.5px;height:28.5px;background:#fff;border:1px solid #dddce2;border-radius:6px;"></div>
<svg style="left:289px;top:312px" width="30" height="28" viewBox="0 0 30 28">
 <rect x="14.3" y="8.6" width="13.6" height="12.2" rx="1" fill="none" stroke="#55535a" stroke-width="1.1"/>
 <path d="M14.3 11.9 H27.9 M17.6 6.9 V9.6 M24.6 6.9 V9.6" stroke="#55535a" stroke-width="1.1"/>
</svg>
<div class="t" style="left:324.5px;top:322px;font-size:11.3px;color:#1f1f22;">Feb 12, 10:27 AM</div>
<svg style="left:417px;top:312px" width="14" height="28" viewBox="0 0 14 28"><path d="M0.4 14.5 H9.2" stroke="#1f1f22" stroke-width="1.1"/><path d="M7.6 12.3 L10.6 14.5 L7.6 16.7 Z" fill="#1f1f22"/></svg>
<div class="t" style="left:431.7px;top:322px;font-size:11.3px;color:#1f1f22;">Feb 19, 10:27 AM</div>
<div class="a" style="left:570px;top:312px;width:268.5px;height:28.5px;background:#fff;border:1px solid #dddce2;border-radius:6px;"></div>
<div class="t" style="left:580.3px;top:322px;font-size:11.4px;color:#a3a1a9;">Event</div>
<div class="a" style="left:850px;top:312px;width:268.5px;height:28.5px;background:#fff;border:1px solid #dddce2;border-radius:6px;"></div>
<div class="t" style="left:860.3px;top:322px;font-size:11.4px;color:#a3a1a9;">Actions</div>
<svg style="left:1094px;top:321px" width="14" height="10" viewBox="0 0 14 10"><path d="M2.4 2.6 L6.6 6.8 L10.8 2.6" fill="none" stroke="#2b2a30" stroke-width="1.4"/></svg>
<div class="a" style="left:1131px;top:312px;width:268.5px;height:28.5px;background:#fff;border:1px solid #dddce2;border-radius:6px;"></div>
<div class="t" style="left:1141.3px;top:322px;font-size:11.4px;color:#a3a1a9;">Select Countries</div>
<svg style="left:1375px;top:321px" width="14" height="10" viewBox="0 0 14 10"><path d="M2.4 2.6 L6.6 6.8 L10.8 2.6" fill="none" stroke="#2b2a30" stroke-width="1.4"/></svg>
<div class="a" style="left:1411px;top:312px;width:268.5px;height:28.5px;background:#fff;border:1px solid #dddce2;border-radius:6px;"></div>
<div class="t" style="left:1421.3px;top:322px;font-size:11.4px;color:#a3a1a9;">IP Address</div>
<div class="a" style="left:1692px;top:312px;width:268.5px;height:28.5px;background:#fff;border:1px solid #dddce2;border-radius:6px;"></div>
<div class="t" style="left:1702.3px;top:322px;font-size:11.4px;color:#a3a1a9;">Response Codes</div>
<svg style="left:1936px;top:321px" width="14" height="10" viewBox="0 0 14 10"><path d="M2.4 2.6 L6.6 6.8 L10.8 2.6" fill="none" stroke="#2b2a30" stroke-width="1.4"/></svg>
<div class="a" style="left:289px;top:353px;width:268.5px;height:28.5px;background:#fff;border:1px solid #dddce2;border-radius:6px;"></div>
<div class="t" style="left:299.3px;top:362px;font-size:11.4px;color:#a3a1a9;">HTTP Methods</div>
<svg style="left:533px;top:362px" width="14" height="10" viewBox="0 0 14 10"><path d="M2.4 2.6 L6.6 6.8 L10.8 2.6" fill="none" stroke="#2b2a30" stroke-width="1.4"/></svg>
<div class="a" style="left:570px;top:353px;width:268.5px;height:28.5px;background:#fff;border:1px solid #dddce2;border-radius:6px;"></div>
<div class="t" style="left:580.3px;top:362px;font-size:11.4px;color:#a3a1a9;">Path</div>
<div class="a" style="left:850px;top:353px;width:268.5px;height:28.5px;background:#fff;border:1px solid #dddce2;border-radius:6px;"></div>
<div class="t" style="left:860.3px;top:362px;font-size:11.4px;color:#a3a1a9;">Request IDs</div>
<div class="a" style="left:1131px;top:353px;width:268.5px;height:28.5px;background:#fff;border:1px solid #dddce2;border-radius:6px;"></div>
<div class="t" style="left:1141.3px;top:362px;font-size:11.4px;color:#a3a1a9;">Reference IDs</div>
<div class="a" style="left:1411px;top:353px;width:268.5px;height:28.5px;background:#fff;border:1px solid #dddce2;border-radius:6px;"></div>
<div class="t" style="left:1421.3px;top:362px;font-size:11.4px;color:#a3a1a9;">Session IDs</div>
<div class="a" style="left:274px;top:397px;width:1701px;height:1px;background:#ededf0;"></div>
<div class="t" style="left:286.4px;top:413px;font-size:11.2px;color:#75737a;">Date</div>
<div class="t" style="left:451px;top:413px;font-size:11.2px;color:#75737a;">Event</div>
<div class="t" style="left:584.5px;top:413px;font-size:11.2px;color:#75737a;">Action</div>
<div class="t" style="left:710px;top:413px;font-size:11.2px;color:#75737a;">Source</div>
<div class="t" style="left:851.2px;top:413px;font-size:11.2px;color:#75737a;">Domain</div>
<div class="t" style="left:1380.8px;top:413px;font-size:11.2px;color:#75737a;">Request</div>
<div class="t" style="left:1909.8px;top:413px;font-size:11.2px;color:#75737a;">Response</div>
<svg style="left:312px;top:410px" width="18" height="14" viewBox="0 0 18 14"><path d="M4.5 3 V11 M2 8.6 L4.5 11.2 L7 8.6" fill="none" stroke="#2b2a30" stroke-width="1.1"/><path d="M11.5 11.2 V3 M9 5.6 L11.5 3 L14 5.6" fill="none" stroke="#8a8890" stroke-width="1.1"/></svg>
<div class="a" style="left:274px;top:437px;width:1701px;height:1px;background:#e8e7ec;"></div>
<div class="t" style="left:286.4px;top:454px;font-size:11px;color:#1f1f22;">2026-02-19 09:26 AM (UTC)</div>
<div class="a" style="left:451px;top:460px;width:5px;height:1px;background:#2a2930"></div>
<div class="a" style="left:584.3px;top:451.6px;width:46.6px;height:16.8px;border:1px solid #85838b;border-radius:9px;background:#e9e8ec"></div>
<div class="t" style="left:591.5px;top:454px;font-size:9.6px;color:#5c5a61;">Passed</div>
<div class="t" style="left:745.6px;top:454px;font-size:11px;color:#1f1f22;">3.4</div>
<div class="t" style="left:851.2px;top:454px;font-size:11px;color:#1f1f22;">security-ins</div>
<div class="t" style="left:1010px;top:454px;font-size:11px;color:#1f1f22;">qaa</div>
<div class="t" style="left:1380.8px;top:454px;font-size:11px;color:#1f1f22;">GET&nbsp;&nbsp;/</div>
<div class="t" style="left:1909.8px;top:454px;font-size:11px;color:#1f1f22;">200</div>
<div class="t" style="left:286.4px;top:496px;font-size:11px;color:#1f1f22;">2026-02-19 09:26 AM (UTC)</div>
<div class="a" style="left:451px;top:503px;width:5px;height:1px;background:#6a6970"></div>
<div class="a" style="left:584.3px;top:494.0px;width:46.6px;height:16.8px;border:1px solid #85838b;border-radius:9px;background:#e9e8ec"></div>
<div class="t" style="left:591.5px;top:497px;font-size:9.6px;color:#5c5a61;">Passed</div>
<div class="t" style="left:745.6px;top:496px;font-size:11px;color:#1f1f22;">3.4</div>
<div class="t" style="left:851.2px;top:496px;font-size:11px;color:#1f1f22;">security-ins</div>
<div class="t" style="left:1010px;top:496px;font-size:11px;color:#1f1f22;">qaa</div>
<div class="t" style="left:1380.8px;top:496px;font-size:11px;color:#1f1f22;">GET&nbsp;&nbsp;/</div>
<div class="t" style="left:1909.8px;top:496px;font-size:11px;color:#1f1f22;">200</div>
<div class="t" style="left:286.4px;top:539px;font-size:11px;color:#1f1f22;">2026-02-19 09:26 AM (UTC)</div>
<div class="a" style="left:451px;top:545px;width:5px;height:1px;background:#a5a4aa"></div>
<div class="a" style="left:584.3px;top:536.4px;width:46.6px;height:16.8px;border:1px solid #85838b;border-radius:9px;background:#e9e8ec"></div>
<div class="t" style="left:591.5px;top:539px;font-size:9.6px;color:#5c5a61;">Passed</div>
<div class="t" style="left:745.6px;top:539px;font-size:11px;color:#1f1f22;">3.4</div>
<div class="t" style="left:851.2px;top:539px;font-size:11px;color:#1f1f22;">security-ins</div>
<div class="t" style="left:1010px;top:539px;font-size:11px;color:#1f1f22;">qaa</div>
<div class="t" style="left:1380.8px;top:539px;font-size:11px;color:#1f1f22;">GET&nbsp;&nbsp;/</div>
<div class="t" style="left:1909.8px;top:539px;font-size:11px;color:#1f1f22;">200</div>
<div class="t" style="left:286.4px;top:581px;font-size:11px;color:#1f1f22;">2026-02-19 09:26 AM (UTC)</div>
<div class="a" style="left:451px;top:587px;width:5px;height:1px;background:#2a2930"></div>
<div class="a" style="left:584.3px;top:578.9px;width:46.6px;height:16.8px;border:1px solid #85838b;border-radius:9px;background:#e9e8ec"></div>
<div class="t" style="left:591.5px;top:582px;font-size:9.6px;color:#5c5a61;">Passed</div>
<div class="t" style="left:745.6px;top:581px;font-size:11px;color:#1f1f22;">3.4</div>
<div class="t" style="left:851.2px;top:581px;font-size:11px;color:#1f1f22;">security-ins</div>
<div class="t" style="left:1010px;top:581px;font-size:11px;color:#1f1f22;">qaa</div>
<div class="t" style="left:1380.8px;top:581px;font-size:11px;color:#1f1f22;">GET&nbsp;&nbsp;/</div>
<div class="t" style="left:1909.8px;top:581px;font-size:11px;color:#1f1f22;">200</div>
<div class="t" style="left:286.4px;top:624px;font-size:11px;color:#1f1f22;">2026-02-19 09:26 AM (UTC)</div>
<div class="a" style="left:451px;top:630px;width:5px;height:1px;background:#a5a4aa"></div>
<div class="a" style="left:584.3px;top:621.3px;width:46.6px;height:16.8px;border:1px solid #85838b;border-radius:9px;background:#e9e8ec"></div>
<div class="t" style="left:591.5px;top:624px;font-size:9.6px;color:#5c5a61;">Passed</div>
<div class="t" style="left:745.6px;top:624px;font-size:11px;color:#1f1f22;">3.4</div>
<div class="t" style="left:851.2px;top:624px;font-size:11px;color:#1f1f22;">security-ins</div>
<div class="t" style="left:1010px;top:624px;font-size:11px;color:#1f1f22;">qaa</div>
<div class="t" style="left:1380.8px;top:624px;font-size:11px;color:#1f1f22;">GET&nbsp;&nbsp;/</div>
<div class="t" style="left:1909.8px;top:624px;font-size:11px;color:#1f1f22;">200</div>
<div class="t" style="left:286.4px;top:666px;font-size:11px;color:#1f1f22;">2026-02-19 09:26 AM (UTC)</div>
<div class="a" style="left:451px;top:672px;width:5px;height:1px;background:#6a6970"></div>
<div class="a" style="left:584.3px;top:663.7px;width:46.6px;height:16.8px;border:1px solid #85838b;border-radius:9px;background:#e9e8ec"></div>
<div class="t" style="left:591.5px;top:667px;font-size:9.6px;color:#5c5a61;">Passed</div>
<div class="t" style="left:745.6px;top:666px;font-size:11px;color:#1f1f22;">3.4</div>
<div class="t" style="left:851.2px;top:666px;font-size:11px;color:#1f1f22;">security-ins</div>
<div class="t" style="left:1010px;top:666px;font-size:11px;color:#1f1f22;">qaa</div>
<div class="t" style="left:1380.8px;top:666px;font-size:11px;color:#1f1f22;">GET&nbsp;&nbsp;/</div>
<div class="t" style="left:1909.8px;top:666px;font-size:11px;color:#1f1f22;">200</div>
<div class="t" style="left:286.4px;top:708px;font-size:11px;color:#1f1f22;">2026-02-19 09:26 AM (UTC)</div>
<div class="a" style="left:451px;top:715px;width:5px;height:1px;background:#55545b"></div>
<div class="a" style="left:584.3px;top:706.1px;width:46.6px;height:16.8px;border:1px solid #85838b;border-radius:9px;background:#e9e8ec"></div>
<div class="t" style="left:591.5px;top:709px;font-size:9.6px;color:#5c5a61;">Passed</div>
<div class="t" style="left:745.6px;top:708px;font-size:11px;color:#1f1f22;">3.4</div>
<div class="t" style="left:851.2px;top:708px;font-size:11px;color:#1f1f22;">security-ins</div>
<div class="t" style="left:1010px;top:708px;font-size:11px;color:#1f1f22;">qaa</div>
<div class="t" style="left:1380.8px;top:708px;font-size:11px;color:#1f1f22;">GET&nbsp;&nbsp;/</div>
<div class="t" style="left:1909.8px;top:708px;font-size:11px;color:#1f1f22;">200</div>
<div class="t" style="left:286.4px;top:751px;font-size:11px;color:#1f1f22;">2026-02-19 09:26 AM (UTC)</div>
<div class="a" style="left:451px;top:757px;width:5px;height:1px;background:#a5a4aa"></div>
<div class="a" style="left:584.3px;top:748.5px;width:46.6px;height:16.8px;border:1px solid #85838b;border-radius:9px;background:#e9e8ec"></div>
<div class="t" style="left:591.5px;top:751px;font-size:9.6px;color:#5c5a61;">Passed</div>
<div class="t" style="left:745.6px;top:751px;font-size:11px;color:#1f1f22;">3.4</div>
<div class="t" style="left:851.2px;top:751px;font-size:11px;color:#1f1f22;">security-ins</div>
<div class="t" style="left:1010px;top:751px;font-size:11px;color:#1f1f22;">qaa</div>
<div class="t" style="left:1380.8px;top:751px;font-size:11px;color:#1f1f22;">GET&nbsp;&nbsp;/</div>
<div class="t" style="left:1909.8px;top:751px;font-size:11px;color:#1f1f22;">200</div>
<div class="t" style="left:286.4px;top:793px;font-size:11px;color:#1f1f22;">2026-02-19 09:26 AM (UTC)</div>
<div class="a" style="left:451px;top:799px;width:5px;height:1px;background:#2a2930"></div>
<div class="a" style="left:584.3px;top:791.0px;width:46.6px;height:16.8px;border:1px solid #85838b;border-radius:9px;background:#e9e8ec"></div>
<div class="t" style="left:591.5px;top:794px;font-size:9.6px;color:#5c5a61;">Passed</div>
<div class="t" style="left:745.6px;top:793px;font-size:11px;color:#1f1f22;">3.4</div>
<div class="t" style="left:851.2px;top:793px;font-size:11px;color:#1f1f22;">security-ins</div>
<div class="t" style="left:1010px;top:793px;font-size:11px;color:#1f1f22;">qaa</div>
<div class="t" style="left:1380.8px;top:793px;font-size:11px;color:#1f1f22;">GET&nbsp;&nbsp;/</div>
<div class="t" style="left:1909.8px;top:793px;font-size:11px;color:#1f1f22;">200</div>
<div class="t" style="left:286.4px;top:836px;font-size:11px;color:#1f1f22;">2026-02-19 09:26 AM (UTC)</div>
<div class="a" style="left:451px;top:842px;width:5px;height:1px;background:#8d8c92"></div>
<div class="a" style="left:584.3px;top:833.4px;width:46.6px;height:16.8px;border:1px solid #85838b;border-radius:9px;background:#e9e8ec"></div>
<div class="t" style="left:591.5px;top:836px;font-size:9.6px;color:#5c5a61;">Passed</div>
<div class="t" style="left:745.6px;top:836px;font-size:11px;color:#1f1f22;">3.4</div>
<div class="t" style="left:851.2px;top:836px;font-size:11px;color:#1f1f22;">security-ins</div>
<div class="t" style="left:1010px;top:836px;font-size:11px;color:#1f1f22;">qaa</div>
<div class="t" style="left:1380.8px;top:836px;font-size:11px;color:#1f1f22;">GET&nbsp;&nbsp;/</div>
<div class="t" style="left:1909.8px;top:836px;font-size:11px;color:#1f1f22;">200</div>
<div class="t" style="left:286.4px;top:878px;font-size:11px;color:#1f1f22;">2026-02-19 09:26 AM (UTC)</div>
<div class="a" style="left:451px;top:884px;width:5px;height:1px;background:#6a6970"></div>
<div class="a" style="left:584.3px;top:875.8px;width:46.6px;height:16.8px;border:1px solid #85838b;border-radius:9px;background:#e9e8ec"></div>
<div class="t" style="left:591.5px;top:879px;font-size:9.6px;color:#5c5a61;">Passed</div>
<div class="t" style="left:745.6px;top:878px;font-size:11px;color:#1f1f22;">3.4</div>
<div class="t" style="left:851.2px;top:878px;font-size:11px;color:#1f1f22;">security-ins</div>
<div class="t" style="left:1010px;top:878px;font-size:11px;color:#1f1f22;">qaa</div>
<div class="t" style="left:1380.8px;top:878px;font-size:11px;color:#1f1f22;">GET&nbsp;&nbsp;/</div>
<div class="t" style="left:1909.8px;top:878px;font-size:11px;color:#1f1f22;">200</div>
<div class="t" style="left:286.4px;top:921px;font-size:11px;color:#1f1f22;">2026-02-19 09:26 AM (UTC)</div>
<div class="a" style="left:451px;top:927px;width:5px;height:1px;background:#2a2930"></div>
<div class="a" style="left:584.3px;top:918.2px;width:46.6px;height:16.8px;border:1px solid #85838b;border-radius:9px;background:#e9e8ec"></div>
<div class="t" style="left:591.5px;top:921px;font-size:9.6px;color:#5c5a61;">Passed</div>
<div class="t" style="left:745.6px;top:921px;font-size:11px;color:#1f1f22;">3.4</div>
<div class="t" style="left:851.2px;top:921px;font-size:11px;color:#1f1f22;">security-ins</div>
<div class="t" style="left:1010px;top:921px;font-size:11px;color:#1f1f22;">qaa</div>
<div class="t" style="left:1380.8px;top:921px;font-size:11px;color:#1f1f22;">GET&nbsp;&nbsp;/</div>
<div class="t" style="left:1909.8px;top:921px;font-size:11px;color:#1f1f22;">200</div>
<div class="t" style="left:286.4px;top:963px;font-size:11px;color:#1f1f22;">2026-02-19 09:26 AM (UTC)</div>
<div class="a" style="left:451px;top:969px;width:5px;height:1px;background:#a5a4aa"></div>
<div class="a" style="left:584.3px;top:960.6px;width:46.6px;height:16.8px;border:1px solid #85838b;border-radius:9px;background:#e9e8ec"></div>
<div class="t" style="left:591.5px;top:964px;font-size:9.6px;color:#5c5a61;">Passed</div>
<div class="t" style="left:745.6px;top:963px;font-size:11px;color:#1f1f22;">3.4</div>
<div class="t" style="left:851.2px;top:963px;font-size:11px;color:#1f1f22;">security-ins</div>
<div class="t" style="left:1010px;top:963px;font-size:11px;color:#1f1f22;">qaa</div>
<div class="t" style="left:1380.8px;top:963px;font-size:11px;color:#1f1f22;">GET&nbsp;&nbsp;/</div>
<div class="t" style="left:1909.8px;top:963px;font-size:11px;color:#1f1f22;">200</div>
<div class="a" style="left:709px;top:447px;width:37.5px;height:546px;background:radial-gradient(ellipse 20px 15px at 50% 50%, #e8e6ed 0%, #eeedf2 55%, #f3f2f5 100%);background-size:37.5px 42.42px;background-position:0 -9.2px;"></div>
<div class="a" style="left:907px;top:449px;width:108.3px;height:533px;background:linear-gradient(to bottom, #f5f5f5 0%, #ededed 50%, #f5f5f5 100%);background-size:108.3px 42.42px;background-position:0 -11.2px;"></div>
</body></html>
